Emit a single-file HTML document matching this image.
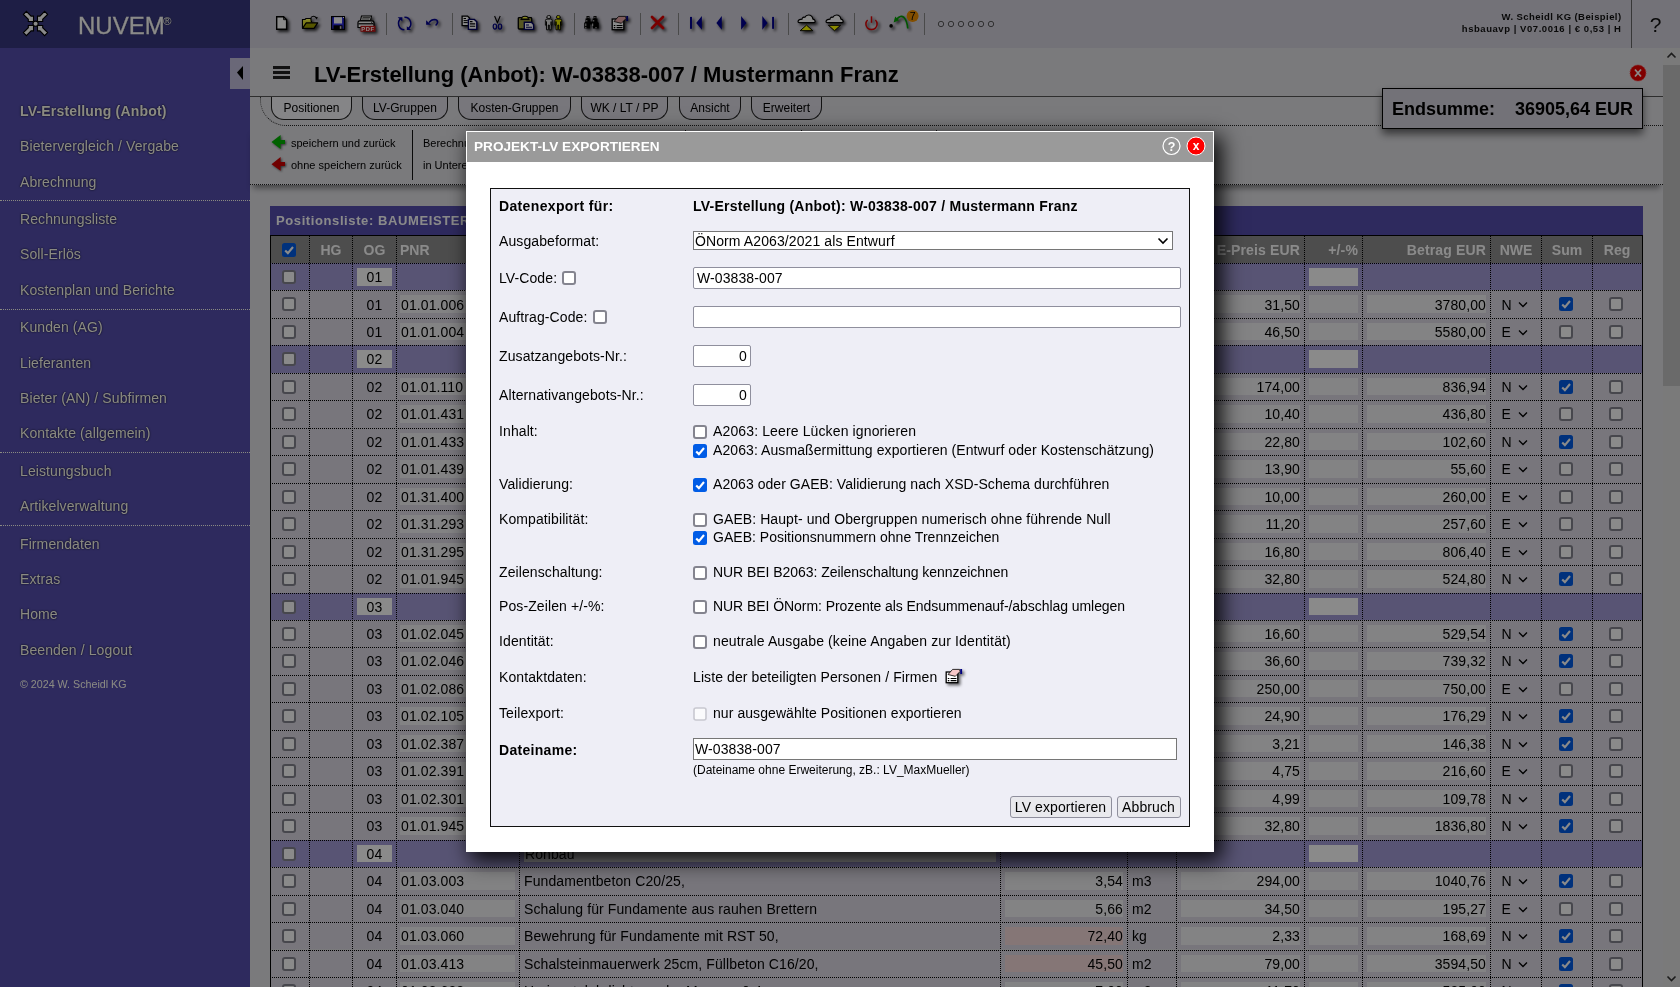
<!DOCTYPE html>
<html><head><meta charset="utf-8"><title>NUVEM - LV exportieren</title>
<style>
html,body{margin:0;padding:0;}
body{width:1680px;height:987px;overflow:hidden;position:relative;font-family:"Liberation Sans", sans-serif;background:#e2e2e6;}
.t{position:absolute;white-space:nowrap;font-family:"Liberation Sans", sans-serif;}
.ls{letter-spacing:0.12px}
input[type=checkbox]{accent-color:#0075ff;}
</style></head><body>
<div id="page" style="will-change:transform;position:absolute;left:0;top:0;width:1680px;height:987px;overflow:hidden">
<div style="position:absolute;left:0px;top:0px;width:250px;height:48px;background:#393980"></div>
<div style="position:absolute;left:0px;top:48px;width:250px;height:939px;background:#554eae"></div>
<svg style="position:absolute;left:20px;top:8px" width="32" height="32" viewBox="0 0 32 32">
<g fill="#ffffff" stroke="#000" stroke-width="1.1" stroke-linejoin="miter">
<path d="M3.4 6.4 L6.4 3.4 L11.1 8.1 L13.5 8.1 L13.5 13.5 L8.3 13.5 L8.3 11.3 Z"/>
<g transform="translate(31,0) scale(-1,1)"><path d="M3.4 6.4 L6.4 3.4 L11.1 8.1 L13.5 8.1 L13.5 13.5 L8.3 13.5 L8.3 11.3 Z"/></g>
<g transform="translate(0,31) scale(1,-1)"><path d="M3.4 6.4 L6.4 3.4 L11.1 8.1 L13.5 8.1 L13.5 13.5 L8.3 13.5 L8.3 11.3 Z"/></g>
<g transform="translate(31,31) scale(-1,-1)"><path d="M3.4 6.4 L6.4 3.4 L11.1 8.1 L13.5 8.1 L13.5 13.5 L8.3 13.5 L8.3 11.3 Z"/></g>
<circle cx="15.6" cy="15.7" r="2.6"/>
</g></svg>
<div class="t" style="left:78px;top:13.68px;font-size:24px;line-height:24px;font-weight:400;color:#ffffff;text-shadow:0 0 1px #000;-webkit-text-stroke:0.3px #ffffff;">NUVEM</div>
<div class="t" style="left:163px;top:16.07px;font-size:11.5px;line-height:11.5px;font-weight:400;color:#ffffff;text-shadow:0 0 1px #000;">&reg;</div>
<div style="position:absolute;left:230px;top:58px;width:20px;height:31px;background:#c4c1de"></div>
<svg style="position:absolute;left:236px;top:65px" width="8" height="16"><path d="M1 7.5 L7 1 L7 15 Z" fill="#000"/></svg>
<div class="t" style="left:20px;top:104.15px;font-size:14px;line-height:14px;font-weight:700;color:#fffff1;text-shadow:0 0 2px #000;letter-spacing:0.18px;">LV-Erstellung (Anbot)</div>
<div class="t" style="left:20px;top:139.15px;font-size:14px;line-height:14px;font-weight:400;color:#fffff1;text-shadow:0 0 2px #000;letter-spacing:0.1px;">Bietervergleich / Vergabe</div>
<div class="t" style="left:20px;top:175.15px;font-size:14px;line-height:14px;font-weight:400;color:#fffff1;text-shadow:0 0 2px #000;letter-spacing:0.1px;">Abrechnung</div>
<div class="t" style="left:20px;top:212.15px;font-size:14px;line-height:14px;font-weight:400;color:#fffff1;text-shadow:0 0 2px #000;letter-spacing:0.1px;">Rechnungsliste</div>
<div class="t" style="left:20px;top:247.15px;font-size:14px;line-height:14px;font-weight:400;color:#fffff1;text-shadow:0 0 2px #000;letter-spacing:0.1px;">Soll-Erl&ouml;s</div>
<div class="t" style="left:20px;top:282.85px;font-size:14px;line-height:14px;font-weight:400;color:#fffff1;text-shadow:0 0 2px #000;letter-spacing:0.1px;">Kostenplan und Berichte</div>
<div class="t" style="left:20px;top:320.35px;font-size:14px;line-height:14px;font-weight:400;color:#fffff1;text-shadow:0 0 2px #000;letter-spacing:0.1px;">Kunden (AG)</div>
<div class="t" style="left:20px;top:355.85px;font-size:14px;line-height:14px;font-weight:400;color:#fffff1;text-shadow:0 0 2px #000;letter-spacing:0.1px;">Lieferanten</div>
<div class="t" style="left:20px;top:390.85px;font-size:14px;line-height:14px;font-weight:400;color:#fffff1;text-shadow:0 0 2px #000;letter-spacing:0.1px;">Bieter (AN) / Subfirmen</div>
<div class="t" style="left:20px;top:425.85px;font-size:14px;line-height:14px;font-weight:400;color:#fffff1;text-shadow:0 0 2px #000;letter-spacing:0.1px;">Kontakte (allgemein)</div>
<div class="t" style="left:20px;top:463.85px;font-size:14px;line-height:14px;font-weight:400;color:#fffff1;text-shadow:0 0 2px #000;letter-spacing:0.1px;">Leistungsbuch</div>
<div class="t" style="left:20px;top:498.85px;font-size:14px;line-height:14px;font-weight:400;color:#fffff1;text-shadow:0 0 2px #000;letter-spacing:0.1px;">Artikelverwaltung</div>
<div class="t" style="left:20px;top:536.85px;font-size:14px;line-height:14px;font-weight:400;color:#fffff1;text-shadow:0 0 2px #000;letter-spacing:0.1px;">Firmendaten</div>
<div class="t" style="left:20px;top:571.85px;font-size:14px;line-height:14px;font-weight:400;color:#fffff1;text-shadow:0 0 2px #000;letter-spacing:0.1px;">Extras</div>
<div class="t" style="left:20px;top:606.85px;font-size:14px;line-height:14px;font-weight:400;color:#fffff1;text-shadow:0 0 2px #000;letter-spacing:0.1px;">Home</div>
<div class="t" style="left:20px;top:642.85px;font-size:14px;line-height:14px;font-weight:400;color:#fffff1;text-shadow:0 0 2px #000;letter-spacing:0.1px;">Beenden / Logout</div>
<div class="t" style="left:20px;top:678.94px;font-size:10.7px;line-height:10.7px;font-weight:400;color:#fffff1;">&copy; 2024 W. Scheidl KG</div>
<div style="position:absolute;left:0px;top:200px;width:250px;height:1px;border-top:1px dotted #fffff1;height:0"></div>
<div style="position:absolute;left:0px;top:309px;width:250px;height:1px;border-top:1px dotted #fffff1;height:0"></div>
<div style="position:absolute;left:0px;top:452px;width:250px;height:1px;border-top:1px dotted #fffff1;height:0"></div>
<div style="position:absolute;left:0px;top:525px;width:250px;height:1px;border-top:1px dotted #fffff1;height:0"></div>
<div style="position:absolute;left:250px;top:0px;width:1430px;height:48px;background:#d5d3de"></div>
<div style="position:absolute;left:250px;top:48px;width:1413px;height:939px;background:#e2e2e6"></div>
<svg style="position:absolute;left:276px;top:16px;filter:drop-shadow(2px 2px 1.5px rgba(0,0,0,.75));" width="12" height="15" viewBox="0 0 12 15"><path d="M0.7 0.7 H7.6 L10.6 3.7 V13.3 H0.7 Z" fill="#fff" stroke="#000" stroke-width="1.4" stroke-linejoin="miter"/><path d="M7.6 0.7 V3.7 H10.6" fill="none" stroke="#000" stroke-width="0.9"/></svg>
<svg style="position:absolute;left:301px;top:15px;filter:drop-shadow(2px 2px 1.5px rgba(0,0,0,.75));" width="19" height="15" viewBox="0 0 19 15"><path d="M1.5 13 V4.5 H4 L5 3.5 H10 V6.5 H11" fill="#ffff60" stroke="#000" stroke-width="1.2"/><path d="M2.2 5.5 H9.5 V8 H4.5 L2.2 11 Z" fill="#e8e830"/><path d="M1.5 13.3 L5.2 7.8 H16.7 L13 13.3 Z" fill="#a0a000" stroke="#000" stroke-width="1.2" stroke-linejoin="round"/><path d="M9.8 2.6 Q12.5 -0.2 15.3 2.6" fill="none" stroke="#000" stroke-width="1.1"/><path d="M14 2.2 L16.8 2 L15.8 4.6 Z" fill="#000"/></svg>
<svg style="position:absolute;left:331px;top:16px;filter:drop-shadow(2px 2px 1.5px rgba(0,0,0,.75));" width="14" height="14" viewBox="0 0 14 14"><rect x="0.6" y="0.6" width="12.8" height="12.8" fill="#3030e0" stroke="#000" stroke-width="1.2"/><rect x="3" y="1.2" width="8" height="6.3" fill="#fff"/><rect x="12" y="1" width="1" height="1" fill="#fff"/><rect x="2.5" y="9.3" width="9" height="4" fill="#000"/><rect x="8.8" y="10.2" width="1.6" height="2.6" fill="#ccc"/></svg>
<svg style="position:absolute;left:357px;top:15px;filter:drop-shadow(2px 2px 1.5px rgba(0,0,0,.75));" width="20" height="18" viewBox="0 0 20 18"><path d="M4.5 1 H14.5 L13.5 5.5 H3.5 Z" fill="#fff" stroke="#000" stroke-width="1.1"/><path d="M5.5 2.6 H13 M5 4 H12.5" stroke="#000" stroke-width="0.7"/><path d="M1 7.5 Q1 5.8 2.8 5.8 H15.2 Q17 5.8 17 7.5 V12.5 H1 Z" fill="#fff" stroke="#000" stroke-width="1.2"/><path d="M1.5 8.8 H16.5" stroke="#000" stroke-width="1.2"/><path d="M15 6.3 L16.5 7.8 M14 7 L16.5 9.5" stroke="#000" stroke-width="0.6"/><rect x="3.5" y="10.8" width="15" height="6" fill="#c01818"/><text x="11" y="15.8" font-size="5.8" font-weight="700" fill="#fff" text-anchor="middle" font-family="Liberation Sans" letter-spacing="0.6">PDF</text></svg>
<div style="position:absolute;left:386px;top:13px;width:1px;height:22px;background:#8a8a8a"></div>
<svg style="position:absolute;left:396px;top:16px;filter:drop-shadow(2px 2px 1.5px rgba(0,0,0,.75));" width="17" height="16" viewBox="0 0 17 16"><g fill="none" stroke="#000090" stroke-width="1.5"><path d="M5.15 2.4 A6.3 6.3 0 0 0 8.4 13.8"/><path d="M8.4 1.2 A6.3 6.3 0 0 1 11.6 13"/></g><path d="M1.7 1.2 H6.4 V5.6 Z" fill="#000090"/><path d="M10.8 10.2 V13.9 H15 Z" fill="#000090"/></svg>
<svg style="position:absolute;left:425px;top:18px;filter:drop-shadow(2px 2px 1.5px rgba(0,0,0,.75));" width="15" height="10" viewBox="0 0 15 10"><path d="M4 4.6 Q6.3 1.5 9.5 1.5 Q12.6 1.6 12.6 4.4 Q12.4 6 10.6 7.5" fill="none" stroke="#000090" stroke-width="1.5"/><path d="M1.1 2.2 V6.8 H6 Z" fill="#000090"/></svg>
<div style="position:absolute;left:452px;top:13px;width:1px;height:22px;background:#8a8a8a"></div>
<svg style="position:absolute;left:461px;top:15px;filter:drop-shadow(2px 2px 1.5px rgba(0,0,0,.75));" width="17" height="16" viewBox="0 0 17 16"><path d="M1.1 1.1 H6.6 L8.5 3 V10.7 H1.1 Z" fill="#fff" stroke="#000" stroke-width="1.3"/><path d="M2.6 3.5 H5 M2.6 5.6 H6.8 M2.6 7.6 H6.8" stroke="#000" stroke-width="1"/><path d="M7.4 4.4 H13.4 L15.8 6.8 V14.4 H7.4 Z" fill="#fff" stroke="#000060" stroke-width="1.4"/><path d="M8.9 6.6 H11.5 M8.9 8.9 H14.2 M8.9 11.2 H14.2" stroke="#000" stroke-width="1.1"/></svg>
<svg style="position:absolute;left:491px;top:15px;filter:drop-shadow(2px 2px 1.5px rgba(0,0,0,.75));" width="13" height="16" viewBox="0 0 13 16"><path d="M3.6 1 L6.6 8.2 M9.2 1 L6.2 8.2" stroke="#000" stroke-width="1.1"/><ellipse cx="3.9" cy="11.6" rx="1.7" ry="2.6" fill="none" stroke="#000080" stroke-width="1.2"/><ellipse cx="9" cy="11.6" rx="1.7" ry="2.6" fill="none" stroke="#000080" stroke-width="1.2"/></svg>
<svg style="position:absolute;left:517px;top:15px;filter:drop-shadow(2px 2px 1.5px rgba(0,0,0,.75));" width="18" height="16" viewBox="0 0 18 16"><rect x="1.3" y="2.6" width="13.4" height="11.4" rx="0.8" fill="#a0a040" stroke="#000" stroke-width="1.3"/><path d="M4.6 4 Q4.6 1.2 8 1.2 Q11.4 1.2 11.4 4 Z" fill="#ffff40" stroke="#000" stroke-width="1.1"/><path d="M3.4 4.6 H12.6" stroke="#000" stroke-width="1"/><path d="M7.3 7.3 H14.4 L16.6 9.5 V14.4 H7.3 Z" fill="#fff" stroke="#000060" stroke-width="1.4"/><path d="M9 10 H12 M9 12.2 H15" stroke="#000060" stroke-width="1.1"/></svg>
<svg style="position:absolute;left:544px;top:15px;filter:drop-shadow(2px 2px 1.5px rgba(0,0,0,.75));" width="20" height="16" viewBox="0 0 20 16"><g transform="translate(0.8,0)"><path d="M1.6 2.4 H6.4" stroke="#000" stroke-width="0.9"/><ellipse cx="4" cy="2" rx="1.9" ry="1.6" fill="#e0e0e0" stroke="#000" stroke-width="0.8"/><path d="M0.6 5.6 Q0.6 4.1 2.2 4.1 H5.8 Q7.4 4.1 7.4 5.6 V10.2 H6.3 V6.6 V14.8 H4.5 V10 H3.5 V14.8 H1.7 V6.6 V10.2 H0.6 Z" fill="#e0e0e0" stroke="#000" stroke-width="0.9" stroke-linejoin="round"/></g><g transform="translate(10.3,0)"><path d="M1.6 2.4 H6.4" stroke="#000" stroke-width="0.9"/><ellipse cx="4" cy="2" rx="1.9" ry="1.6" fill="#f0f000" stroke="#000" stroke-width="0.8"/><path d="M0.6 5.6 Q0.6 4.1 2.2 4.1 H5.8 Q7.4 4.1 7.4 5.6 V10.2 H6.3 V6.6 V14.8 H4.5 V10 H3.5 V14.8 H1.7 V6.6 V10.2 H0.6 Z" fill="#f0f000" stroke="#000" stroke-width="0.9" stroke-linejoin="round"/></g></svg>
<div style="position:absolute;left:574px;top:13px;width:1px;height:22px;background:#8a8a8a"></div>
<svg style="position:absolute;left:583px;top:15px;filter:drop-shadow(2px 2px 1.5px rgba(0,0,0,.75));" width="17" height="15" viewBox="0 0 17 15"><path d="M3.5 1 H6.5 V3.5 H7.5 V6.5 H9.5 V3.5 H10.5 V1 H13.5 V3.5 H14.5 V6.5 L15.8 8 V13.6 H10 V9.5 H7 V13.6 H1.2 V8 L2.5 6.5 V3.5 H3.5 Z" fill="#000"/><rect x="4.6" y="1.8" width="1" height="1.3" fill="#bbb"/><rect x="11.4" y="1.8" width="1" height="1.3" fill="#bbb"/><rect x="3.3" y="5" width="1" height="1.5" fill="#bbb"/><rect x="10.2" y="5" width="1" height="1.5" fill="#bbb"/><rect x="2.3" y="8.5" width="1" height="2.6" fill="#ccc"/><rect x="9.2" y="8.5" width="1" height="2.6" fill="#ccc"/><rect x="2.3" y="12" width="1" height="1.3" fill="#ccc"/><rect x="12.5" y="12" width="1" height="1.3" fill="#ccc"/></svg>
<svg style="position:absolute;left:611px;top:15px;filter:drop-shadow(2px 2px 1.5px rgba(0,0,0,.75));" width="18" height="16" viewBox="0 0 18 16"><rect x="1.2" y="4" width="11.6" height="10.7" fill="#fff" stroke="#000" stroke-width="1.3"/><path d="M2.8 10.5 H4.3 M5.6 10.5 H11.5 M2.8 12.6 H4.3 M5.6 12.6 H11.5" stroke="#000" stroke-width="1.1"/><path d="M3 6.5 L7.6 1.4 H14.6 L15 3.6 L10.3 8.3 Z" fill="#e8a8a8" stroke="#000" stroke-width="0.8"/><rect x="15.2" y="1" width="1.9" height="5" fill="#000080"/></svg>
<div style="position:absolute;left:640px;top:13px;width:1px;height:22px;background:#8a8a8a"></div>
<svg style="position:absolute;left:650px;top:15px;filter:drop-shadow(2px 2px 1.5px rgba(0,0,0,.75));" width="15" height="15" viewBox="0 0 15 15"><path d="M2 2 L13 13 M13 2 L2 13" stroke="#e00000" stroke-width="2.8" stroke-linecap="round"/></svg>
<div style="position:absolute;left:678px;top:13px;width:1px;height:22px;background:#8a8a8a"></div>
<svg style="position:absolute;left:688px;top:14px;filter:drop-shadow(2px 2px 1.5px rgba(0,0,0,.75));" width="90" height="18" viewBox="0 0 90 18"><g fill="#000090"><rect x="2" y="2.9" width="2" height="11.9"/><path d="M8.2 8.9 L13.9 2 V15.7 Z"/><path d="M28.4 8.9 L33.8 2 V15.7 Z"/><path d="M53.1 2 L58.5 8.9 L53.1 15.7 Z"/><path d="M74.3 2 L79.6 8.9 L74.3 15.7 Z"/><rect x="84.1" y="2.9" width="1.9" height="11.9"/></g></svg>
<div style="position:absolute;left:788px;top:13px;width:1px;height:22px;background:#8a8a8a"></div>
<svg style="position:absolute;left:796px;top:13px;filter:drop-shadow(2px 2px 1.5px rgba(0,0,0,.75));" width="21" height="20" viewBox="0 0 21 20"><path d="M3 9.6 H18 Q19.3 9.6 19.1 8 Q18.9 6.2 16.9 6.1 Q16.2 2 12.6 2 Q9.9 2 8.9 4.3 Q7.3 3.8 6.4 5 Q6 5.6 6.1 6.1 Q2.3 6.4 2 8.3 Q2 9.6 3 9.6 Z" fill="#fff" stroke="#000" stroke-width="1.15" stroke-linejoin="round"/><path d="M10.5 12.1 L16.7 17.7 L4.2 17.7 Z" fill="#ffff00" stroke="#000" stroke-width="1"/></svg>
<svg style="position:absolute;left:824px;top:13px;filter:drop-shadow(2px 2px 1.5px rgba(0,0,0,.75));" width="21" height="20" viewBox="0 0 21 20"><path d="M3 9.6 H18 Q19.3 9.6 19.1 8 Q18.9 6.2 16.9 6.1 Q16.2 2 12.6 2 Q9.9 2 8.9 4.3 Q7.3 3.8 6.4 5 Q6 5.6 6.1 6.1 Q2.3 6.4 2 8.3 Q2 9.6 3 9.6 Z" fill="#fff" stroke="#000" stroke-width="1.15" stroke-linejoin="round"/><path d="M4.4 12.3 L16.6 12.3 L10.5 17.7 Z" fill="#ffff00" stroke="#000" stroke-width="1"/></svg>
<div style="position:absolute;left:854px;top:13px;width:1px;height:22px;background:#8a8a8a"></div>
<svg style="position:absolute;left:864px;top:16px;filter:drop-shadow(2px 2px 1.5px rgba(0,0,0,.75));" width="15" height="15" viewBox="0 0 15 15"><path d="M3.6 4 A5.6 5.6 0 1 0 11.4 4" fill="none" stroke="#e00000" stroke-width="1.5"/><path d="M7.5 0.3 V6.8" stroke="#e00000" stroke-width="1.5"/></svg>
<svg style="position:absolute;left:888px;top:9px" width="32" height="24" viewBox="0 0 32 24"><g style="filter:drop-shadow(2px 2px 1.5px rgba(0,0,0,.75));"><circle cx="3.1" cy="16.9" r="1.8" fill="#000"/><path d="M8.5 10.5 Q12.5 5.5 16 8.5 Q19 11.5 19.8 19.5" fill="none" stroke="#00a000" stroke-width="1.7"/><path d="M5.6 13.6 L7.2 7.6 L11 11.2 Z" fill="#00a000"/></g><circle cx="24.6" cy="7.1" r="6" fill="#f09000"/><text x="24.6" y="11" font-size="10.5" fill="#000" text-anchor="middle" font-family="Liberation Sans">7</text></svg>
<div style="position:absolute;left:924px;top:13px;width:1px;height:22px;background:#8a8a8a"></div>
<svg style="position:absolute;left:937px;top:20px" width="62" height="8"><circle cx="4" cy="4" r="2.7" fill="none" stroke="#5a5a5a" stroke-width="1"/><circle cx="14" cy="4" r="2.7" fill="none" stroke="#5a5a5a" stroke-width="1"/><circle cx="24" cy="4" r="2.7" fill="none" stroke="#5a5a5a" stroke-width="1"/><circle cx="34" cy="4" r="2.7" fill="none" stroke="#5a5a5a" stroke-width="1"/><circle cx="44" cy="4" r="2.7" fill="none" stroke="#5a5a5a" stroke-width="1"/><circle cx="54" cy="4" r="2.7" fill="none" stroke="#5a5a5a" stroke-width="1"/></svg>
<div class="t" style="left:1321.5px;width:300px;text-align:right;top:11.76px;font-size:9.5px;line-height:9.5px;font-weight:700;color:#111;letter-spacing:0.42px;">W. Scheidl KG (Beispiel)</div>
<div class="t" style="left:1321.5px;width:300px;text-align:right;top:24.36px;font-size:9.5px;line-height:9.5px;font-weight:700;color:#111;letter-spacing:0.55px;">hsbauavp | V07.0016 | &euro; 0,53 | H</div>
<div style="position:absolute;left:1631px;top:0px;width:1px;height:48px;background:#666"></div>
<div class="t" style="left:1640.5px;width:30px;text-align:center;top:13.92px;font-size:21px;line-height:21px;font-weight:400;color:#111;">?</div>
<svg style="position:absolute;left:273px;top:66px" width="17" height="13"><rect x="0" y="0" width="17" height="3" fill="#222"/><rect x="0" y="5" width="17" height="3" fill="#222"/><rect x="0" y="10" width="17" height="3" fill="#222"/></svg>
<div class="t" style="left:314px;top:63.68px;font-size:22px;line-height:22px;font-weight:700;color:#000;">LV-Erstellung (Anbot): W-03838-007 / Mustermann Franz</div>
<svg style="position:absolute;left:1629px;top:64px" width="18" height="18"><circle cx="9" cy="9" r="8" fill="#ed0000" stroke="#ff5959" stroke-width="1" stroke-dasharray="1 1"/><path d="M6 5.5 L12 12.5 M12 5.5 L6 12.5" stroke="#ffffff" stroke-width="1.8"/></svg>
<div style="position:absolute;left:250px;top:96px;width:1413px;height:1px;background:#555"></div>
<div style="position:absolute;left:260px;top:97px;width:1403px;height:29px;border-left:1px dotted #444;border-bottom:1px dotted #222;border-bottom-left-radius:26px;box-sizing:border-box"></div>
<div style="position:absolute;left:271px;top:97px;width:81px;height:23px;box-sizing:border-box;border:1px solid #222;border-top:none;border-radius:0 0 13px 13px;background:#f6f6fa"></div>
<div class="t" style="left:271.0px;width:81px;text-align:center;top:101.84px;font-size:12px;line-height:12px;font-weight:400;color:#000;">Positionen</div>
<div style="position:absolute;left:362px;top:97px;width:86px;height:23px;box-sizing:border-box;border:1px solid #222;border-top:none;border-radius:0 0 13px 13px;background:#dedce6"></div>
<div class="t" style="left:362.0px;width:86px;text-align:center;top:101.84px;font-size:12px;line-height:12px;font-weight:400;color:#000;">LV-Gruppen</div>
<div style="position:absolute;left:458px;top:97px;width:113px;height:23px;box-sizing:border-box;border:1px solid #222;border-top:none;border-radius:0 0 13px 13px;background:#dedce6"></div>
<div class="t" style="left:458.0px;width:113px;text-align:center;top:101.84px;font-size:12px;line-height:12px;font-weight:400;color:#000;">Kosten-Gruppen</div>
<div style="position:absolute;left:581px;top:97px;width:87px;height:23px;box-sizing:border-box;border:1px solid #222;border-top:none;border-radius:0 0 13px 13px;background:#dedce6"></div>
<div class="t" style="left:581.0px;width:87px;text-align:center;top:101.84px;font-size:12px;line-height:12px;font-weight:400;color:#000;">WK / LT / PP</div>
<div style="position:absolute;left:679px;top:97px;width:62px;height:23px;box-sizing:border-box;border:1px solid #222;border-top:none;border-radius:0 0 13px 13px;background:#dedce6"></div>
<div class="t" style="left:679.0px;width:62px;text-align:center;top:101.84px;font-size:12px;line-height:12px;font-weight:400;color:#000;">Ansicht</div>
<div style="position:absolute;left:751px;top:97px;width:71px;height:23px;box-sizing:border-box;border:1px solid #222;border-top:none;border-radius:0 0 13px 13px;background:#dedce6"></div>
<div class="t" style="left:751.0px;width:71px;text-align:center;top:101.84px;font-size:12px;line-height:12px;font-weight:400;color:#000;">Erweitert</div>
<div style="position:absolute;left:250px;top:126px;width:1413px;height:59px;border-bottom:1px dotted #222;box-sizing:border-box;box-shadow:0 6px 6px -3px rgba(0,0,0,.45)"></div>
<div style="position:absolute;left:250px;top:126px;width:1413px;height:58px;background:#e2e2e6"></div>
<svg style="position:absolute;left:270px;top:134px" width="18" height="17"><path d="M1.5 8.1 L10.6 1.1 V6 H15 V10 H10.6 V14.9 Z" fill="#00b400" filter="drop-shadow(1.5px 1.5px 1px rgba(0,0,0,.6))"/></svg>
<svg style="position:absolute;left:270px;top:156px" width="18" height="17"><path d="M1.5 8.3 L10.6 1 V6 H15 V10 H10.6 V14.8 Z" fill="#d00000" filter="drop-shadow(1.5px 1.5px 1px rgba(0,0,0,.6))"/></svg>
<div class="t" style="left:291px;top:137.69px;font-size:11px;line-height:11px;font-weight:400;color:#000;">speichern und zur&uuml;ck</div>
<div class="t" style="left:291px;top:159.69px;font-size:11px;line-height:11px;font-weight:400;color:#000;">ohne speichern zur&uuml;ck</div>
<div style="position:absolute;left:412px;top:130px;width:1px;height:50px;background:#111"></div>
<div style="position:absolute;left:685px;top:130px;width:1px;height:50px;background:#111"></div>
<div style="position:absolute;left:801px;top:130px;width:1px;height:50px;background:#111"></div>
<div style="position:absolute;left:936px;top:130px;width:1px;height:50px;background:#111"></div>
<div class="t" style="left:423px;top:137.69px;font-size:11px;line-height:11px;font-weight:400;color:#000;">Berechnung der Mengen</div>
<div class="t" style="left:423px;top:159.69px;font-size:11px;line-height:11px;font-weight:400;color:#000;">in Unterebenen</div>
<div style="position:absolute;left:270px;top:206px;width:1373px;height:30px;background:#554eae"></div>
<div class="t" style="left:276px;top:214.00px;font-size:13px;line-height:13px;font-weight:700;color:#ffffff;letter-spacing:0.6px;">Positionsliste: BAUMEISTERARBEITEN</div>
<div style="position:absolute;left:270px;top:235px;width:1373px;height:1px;background:#000"></div>
<div style="position:absolute;left:270px;top:236px;width:1373px;height:28px;background:#8f8f8f"></div>
<div class="t" style="left:311.0px;width:40px;text-align:center;top:243.15px;font-size:14px;line-height:14px;font-weight:700;color:#ffffff;">HG</div>
<div class="t" style="left:354.5px;width:40px;text-align:center;top:243.15px;font-size:14px;line-height:14px;font-weight:700;color:#ffffff;">OG</div>
<div class="t" style="left:400px;top:243.15px;font-size:14px;line-height:14px;font-weight:700;color:#ffffff;">PNR</div>
<div class="t" style="left:524px;top:243.15px;font-size:14px;line-height:14px;font-weight:700;color:#ffffff;">Kurztext</div>
<div class="t" style="left:1003px;width:120px;text-align:right;top:243.15px;font-size:14px;line-height:14px;font-weight:700;color:#ffffff;">Menge</div>
<div class="t" style="left:1180px;top:243.15px;font-size:14px;line-height:14px;font-weight:700;color:#ffffff;">EH</div>
<div class="t" style="left:1180px;width:120px;text-align:right;top:243.15px;font-size:14px;line-height:14px;font-weight:700;color:#ffffff;letter-spacing:0.15px;">E-Preis EUR</div>
<div class="t" style="left:1298px;width:60px;text-align:right;top:243.15px;font-size:14px;line-height:14px;font-weight:700;color:#ffffff;letter-spacing:0.15px;">+/-%</div>
<div class="t" style="left:1366px;width:120px;text-align:right;top:243.15px;font-size:14px;line-height:14px;font-weight:700;color:#ffffff;letter-spacing:0.15px;">Betrag EUR</div>
<div class="t" style="left:1491.0px;width:50px;text-align:center;top:243.15px;font-size:14px;line-height:14px;font-weight:700;color:#ffffff;">NWE</div>
<div class="t" style="left:1542.0px;width:50px;text-align:center;top:243.15px;font-size:14px;line-height:14px;font-weight:700;color:#ffffff;">Sum</div>
<div class="t" style="left:1592.0px;width:50px;text-align:center;top:243.15px;font-size:14px;line-height:14px;font-weight:700;color:#ffffff;">Reg</div>
<svg style="position:absolute;left:282px;top:243.00px" width="14" height="14" viewBox="0 0 14 14"><rect x="0" y="0" width="14" height="14" rx="2.5" fill="#005ce6"/><path d="M3.2 7.4 L5.9 10.1 L11 4" fill="none" stroke="#fff" stroke-width="2.1"/></svg>
<div style="position:absolute;left:270px;top:263.0px;width:1373px;height:27.46px;background:#a39cd7"></div>
<div style="position:absolute;left:357px;top:268.0px;width:35px;height:17.5px;background:#ffffff"></div>
<div class="t" style="left:357.0px;width:35px;text-align:center;top:270.05px;font-size:14px;line-height:14px;font-weight:400;color:#000;letter-spacing:0.1px;">01</div>
<div style="position:absolute;left:1309px;top:268.0px;width:49px;height:17.5px;background:#ffffff"></div>
<div style="position:absolute;left:524px;top:268.0px;width:472px;height:17.5px;background:#ededf1"></div>
<div class="t" style="left:525px;top:270.05px;font-size:14px;line-height:14px;font-weight:400;color:#000;letter-spacing:0.1px;">Erdarbeiten</div>
<svg style="position:absolute;left:282px;top:270.00px" width="14" height="14" viewBox="0 0 14 14"><rect x="1" y="1" width="12" height="12" rx="2" fill="#fff" stroke="#84848f" stroke-width="2"/></svg>
<div style="position:absolute;left:270px;top:290.46px;width:1373px;height:27.46px;background:#dedbe6"></div>
<div class="t" style="left:357.0px;width:35px;text-align:center;top:297.51px;font-size:14px;line-height:14px;font-weight:400;color:#000;letter-spacing:0.1px;">01</div>
<div style="position:absolute;left:400px;top:295.46px;width:115px;height:17.5px;background:#f3f3f4"></div>
<div class="t" style="left:401px;top:297.51px;font-size:14px;line-height:14px;font-weight:400;color:#000;letter-spacing:0.1px;">01.01.006</div>
<div class="t" style="left:524px;top:297.51px;font-size:14px;line-height:14px;font-weight:400;color:#000;letter-spacing:0.1px;">Aushub Baugrube</div>
<div style="position:absolute;left:1005px;top:295.46px;width:118px;height:17.5px;background:#f3f3f4"></div>
<div class="t" style="left:1013px;width:110px;text-align:right;top:297.51px;font-size:14px;line-height:14px;font-weight:400;color:#000;letter-spacing:0.1px;">120,00</div>
<div class="t" style="left:1132px;top:297.51px;font-size:14px;line-height:14px;font-weight:400;color:#000;letter-spacing:0.1px;">m3</div>
<div style="position:absolute;left:1181px;top:295.46px;width:119px;height:17.5px;background:#f3f3f4"></div>
<div class="t" style="left:1190px;width:110px;text-align:right;top:297.51px;font-size:14px;line-height:14px;font-weight:400;color:#000;letter-spacing:0.1px;">31,50</div>
<div style="position:absolute;left:1309px;top:295.46px;width:49px;height:17.5px;background:#f3f3f4"></div>
<div style="position:absolute;left:1367px;top:295.46px;width:119px;height:17.5px;background:#f3f3f4"></div>
<div class="t" style="left:1376px;width:110px;text-align:right;top:297.51px;font-size:14px;line-height:14px;font-weight:400;color:#000;letter-spacing:0.1px;">3780,00</div>
<div class="t" style="left:1501.5px;top:297.51px;font-size:14px;line-height:14px;font-weight:400;color:#000;letter-spacing:0.1px;">N</div>
<svg style="position:absolute;left:1518px;top:301.46px" width="10" height="7"><path d="M1 1.5 L5 5.5 L9 1.5" fill="none" stroke="#000" stroke-width="1.3"/></svg>
<svg style="position:absolute;left:1559px;top:297.46px" width="14" height="14" viewBox="0 0 14 14"><rect x="0" y="0" width="14" height="14" rx="2.5" fill="#005ce6"/><path d="M3.2 7.4 L5.9 10.1 L11 4" fill="none" stroke="#fff" stroke-width="2.1"/></svg>
<svg style="position:absolute;left:1609px;top:297.46px" width="14" height="14" viewBox="0 0 14 14"><rect x="1" y="1" width="12" height="12" rx="2" fill="#fff" stroke="#84848f" stroke-width="2"/></svg>
<svg style="position:absolute;left:282px;top:297.46px" width="14" height="14" viewBox="0 0 14 14"><rect x="1" y="1" width="12" height="12" rx="2" fill="#fff" stroke="#84848f" stroke-width="2"/></svg>
<div style="position:absolute;left:270px;top:317.92px;width:1373px;height:27.46px;background:#dedbe6"></div>
<div class="t" style="left:357.0px;width:35px;text-align:center;top:324.97px;font-size:14px;line-height:14px;font-weight:400;color:#000;letter-spacing:0.1px;">01</div>
<div style="position:absolute;left:400px;top:322.92px;width:115px;height:17.5px;background:#f3f3f4"></div>
<div class="t" style="left:401px;top:324.97px;font-size:14px;line-height:14px;font-weight:400;color:#000;letter-spacing:0.1px;">01.01.004</div>
<div class="t" style="left:524px;top:324.97px;font-size:14px;line-height:14px;font-weight:400;color:#000;letter-spacing:0.1px;">Humus abtragen</div>
<div style="position:absolute;left:1005px;top:322.92px;width:118px;height:17.5px;background:#f3f3f4"></div>
<div class="t" style="left:1013px;width:110px;text-align:right;top:324.97px;font-size:14px;line-height:14px;font-weight:400;color:#000;letter-spacing:0.1px;">120,00</div>
<div class="t" style="left:1132px;top:324.97px;font-size:14px;line-height:14px;font-weight:400;color:#000;letter-spacing:0.1px;">m2</div>
<div style="position:absolute;left:1181px;top:322.92px;width:119px;height:17.5px;background:#f3f3f4"></div>
<div class="t" style="left:1190px;width:110px;text-align:right;top:324.97px;font-size:14px;line-height:14px;font-weight:400;color:#000;letter-spacing:0.1px;">46,50</div>
<div style="position:absolute;left:1309px;top:322.92px;width:49px;height:17.5px;background:#f3f3f4"></div>
<div style="position:absolute;left:1367px;top:322.92px;width:119px;height:17.5px;background:#f3f3f4"></div>
<div class="t" style="left:1376px;width:110px;text-align:right;top:324.97px;font-size:14px;line-height:14px;font-weight:400;color:#000;letter-spacing:0.1px;">5580,00</div>
<div class="t" style="left:1501.5px;top:324.97px;font-size:14px;line-height:14px;font-weight:400;color:#000;letter-spacing:0.1px;">E</div>
<svg style="position:absolute;left:1518px;top:328.92px" width="10" height="7"><path d="M1 1.5 L5 5.5 L9 1.5" fill="none" stroke="#000" stroke-width="1.3"/></svg>
<svg style="position:absolute;left:1559px;top:324.92px" width="14" height="14" viewBox="0 0 14 14"><rect x="1" y="1" width="12" height="12" rx="2" fill="#fff" stroke="#84848f" stroke-width="2"/></svg>
<svg style="position:absolute;left:1609px;top:324.92px" width="14" height="14" viewBox="0 0 14 14"><rect x="1" y="1" width="12" height="12" rx="2" fill="#fff" stroke="#84848f" stroke-width="2"/></svg>
<svg style="position:absolute;left:282px;top:324.92px" width="14" height="14" viewBox="0 0 14 14"><rect x="1" y="1" width="12" height="12" rx="2" fill="#fff" stroke="#84848f" stroke-width="2"/></svg>
<div style="position:absolute;left:270px;top:345.38px;width:1373px;height:27.46px;background:#a39cd7"></div>
<div style="position:absolute;left:357px;top:350.38px;width:35px;height:17.5px;background:#ffffff"></div>
<div class="t" style="left:357.0px;width:35px;text-align:center;top:352.43px;font-size:14px;line-height:14px;font-weight:400;color:#000;letter-spacing:0.1px;">02</div>
<div style="position:absolute;left:1309px;top:350.38px;width:49px;height:17.5px;background:#ffffff"></div>
<div style="position:absolute;left:524px;top:350.38px;width:472px;height:17.5px;background:#ededf1"></div>
<div class="t" style="left:525px;top:352.43px;font-size:14px;line-height:14px;font-weight:400;color:#000;letter-spacing:0.1px;">Baustelleneinrichtung</div>
<svg style="position:absolute;left:282px;top:352.38px" width="14" height="14" viewBox="0 0 14 14"><rect x="1" y="1" width="12" height="12" rx="2" fill="#fff" stroke="#84848f" stroke-width="2"/></svg>
<div style="position:absolute;left:270px;top:372.84000000000003px;width:1373px;height:27.46px;background:#dedbe6"></div>
<div class="t" style="left:357.0px;width:35px;text-align:center;top:379.89px;font-size:14px;line-height:14px;font-weight:400;color:#000;letter-spacing:0.1px;">02</div>
<div style="position:absolute;left:400px;top:377.84000000000003px;width:115px;height:17.5px;background:#f3f3f4"></div>
<div class="t" style="left:401px;top:379.89px;font-size:14px;line-height:14px;font-weight:400;color:#000;letter-spacing:0.1px;">01.01.110</div>
<div class="t" style="left:524px;top:379.89px;font-size:14px;line-height:14px;font-weight:400;color:#000;letter-spacing:0.1px;">Baustelle einrichten</div>
<div style="position:absolute;left:1005px;top:377.84000000000003px;width:118px;height:17.5px;background:#f3f3f4"></div>
<div class="t" style="left:1013px;width:110px;text-align:right;top:379.89px;font-size:14px;line-height:14px;font-weight:400;color:#000;letter-spacing:0.1px;">4,81</div>
<div class="t" style="left:1132px;top:379.89px;font-size:14px;line-height:14px;font-weight:400;color:#000;letter-spacing:0.1px;">PA</div>
<div style="position:absolute;left:1181px;top:377.84000000000003px;width:119px;height:17.5px;background:#f3f3f4"></div>
<div class="t" style="left:1190px;width:110px;text-align:right;top:379.89px;font-size:14px;line-height:14px;font-weight:400;color:#000;letter-spacing:0.1px;">174,00</div>
<div style="position:absolute;left:1309px;top:377.84000000000003px;width:49px;height:17.5px;background:#f3f3f4"></div>
<div style="position:absolute;left:1367px;top:377.84000000000003px;width:119px;height:17.5px;background:#f3f3f4"></div>
<div class="t" style="left:1376px;width:110px;text-align:right;top:379.89px;font-size:14px;line-height:14px;font-weight:400;color:#000;letter-spacing:0.1px;">836,94</div>
<div class="t" style="left:1501.5px;top:379.89px;font-size:14px;line-height:14px;font-weight:400;color:#000;letter-spacing:0.1px;">N</div>
<svg style="position:absolute;left:1518px;top:383.84px" width="10" height="7"><path d="M1 1.5 L5 5.5 L9 1.5" fill="none" stroke="#000" stroke-width="1.3"/></svg>
<svg style="position:absolute;left:1559px;top:379.84px" width="14" height="14" viewBox="0 0 14 14"><rect x="0" y="0" width="14" height="14" rx="2.5" fill="#005ce6"/><path d="M3.2 7.4 L5.9 10.1 L11 4" fill="none" stroke="#fff" stroke-width="2.1"/></svg>
<svg style="position:absolute;left:1609px;top:379.84px" width="14" height="14" viewBox="0 0 14 14"><rect x="1" y="1" width="12" height="12" rx="2" fill="#fff" stroke="#84848f" stroke-width="2"/></svg>
<svg style="position:absolute;left:282px;top:379.84px" width="14" height="14" viewBox="0 0 14 14"><rect x="1" y="1" width="12" height="12" rx="2" fill="#fff" stroke="#84848f" stroke-width="2"/></svg>
<div style="position:absolute;left:270px;top:400.3px;width:1373px;height:27.46px;background:#dedbe6"></div>
<div class="t" style="left:357.0px;width:35px;text-align:center;top:407.35px;font-size:14px;line-height:14px;font-weight:400;color:#000;letter-spacing:0.1px;">02</div>
<div style="position:absolute;left:400px;top:405.3px;width:115px;height:17.5px;background:#f3f3f4"></div>
<div class="t" style="left:401px;top:407.35px;font-size:14px;line-height:14px;font-weight:400;color:#000;letter-spacing:0.1px;">01.01.431</div>
<div class="t" style="left:524px;top:407.35px;font-size:14px;line-height:14px;font-weight:400;color:#000;letter-spacing:0.1px;">Bauzaun</div>
<div style="position:absolute;left:1005px;top:405.3px;width:118px;height:17.5px;background:#f3f3f4"></div>
<div class="t" style="left:1013px;width:110px;text-align:right;top:407.35px;font-size:14px;line-height:14px;font-weight:400;color:#000;letter-spacing:0.1px;">42,00</div>
<div class="t" style="left:1132px;top:407.35px;font-size:14px;line-height:14px;font-weight:400;color:#000;letter-spacing:0.1px;">m</div>
<div style="position:absolute;left:1181px;top:405.3px;width:119px;height:17.5px;background:#f3f3f4"></div>
<div class="t" style="left:1190px;width:110px;text-align:right;top:407.35px;font-size:14px;line-height:14px;font-weight:400;color:#000;letter-spacing:0.1px;">10,40</div>
<div style="position:absolute;left:1309px;top:405.3px;width:49px;height:17.5px;background:#f3f3f4"></div>
<div style="position:absolute;left:1367px;top:405.3px;width:119px;height:17.5px;background:#f3f3f4"></div>
<div class="t" style="left:1376px;width:110px;text-align:right;top:407.35px;font-size:14px;line-height:14px;font-weight:400;color:#000;letter-spacing:0.1px;">436,80</div>
<div class="t" style="left:1501.5px;top:407.35px;font-size:14px;line-height:14px;font-weight:400;color:#000;letter-spacing:0.1px;">E</div>
<svg style="position:absolute;left:1518px;top:411.30px" width="10" height="7"><path d="M1 1.5 L5 5.5 L9 1.5" fill="none" stroke="#000" stroke-width="1.3"/></svg>
<svg style="position:absolute;left:1559px;top:407.30px" width="14" height="14" viewBox="0 0 14 14"><rect x="1" y="1" width="12" height="12" rx="2" fill="#fff" stroke="#84848f" stroke-width="2"/></svg>
<svg style="position:absolute;left:1609px;top:407.30px" width="14" height="14" viewBox="0 0 14 14"><rect x="1" y="1" width="12" height="12" rx="2" fill="#fff" stroke="#84848f" stroke-width="2"/></svg>
<svg style="position:absolute;left:282px;top:407.30px" width="14" height="14" viewBox="0 0 14 14"><rect x="1" y="1" width="12" height="12" rx="2" fill="#fff" stroke="#84848f" stroke-width="2"/></svg>
<div style="position:absolute;left:270px;top:427.76px;width:1373px;height:27.46px;background:#dedbe6"></div>
<div class="t" style="left:357.0px;width:35px;text-align:center;top:434.81px;font-size:14px;line-height:14px;font-weight:400;color:#000;letter-spacing:0.1px;">02</div>
<div style="position:absolute;left:400px;top:432.76px;width:115px;height:17.5px;background:#f3f3f4"></div>
<div class="t" style="left:401px;top:434.81px;font-size:14px;line-height:14px;font-weight:400;color:#000;letter-spacing:0.1px;">01.01.433</div>
<div class="t" style="left:524px;top:434.81px;font-size:14px;line-height:14px;font-weight:400;color:#000;letter-spacing:0.1px;">Bautafel</div>
<div style="position:absolute;left:1005px;top:432.76px;width:118px;height:17.5px;background:#f3f3f4"></div>
<div class="t" style="left:1013px;width:110px;text-align:right;top:434.81px;font-size:14px;line-height:14px;font-weight:400;color:#000;letter-spacing:0.1px;">4,50</div>
<div class="t" style="left:1132px;top:434.81px;font-size:14px;line-height:14px;font-weight:400;color:#000;letter-spacing:0.1px;">St</div>
<div style="position:absolute;left:1181px;top:432.76px;width:119px;height:17.5px;background:#f3f3f4"></div>
<div class="t" style="left:1190px;width:110px;text-align:right;top:434.81px;font-size:14px;line-height:14px;font-weight:400;color:#000;letter-spacing:0.1px;">22,80</div>
<div style="position:absolute;left:1309px;top:432.76px;width:49px;height:17.5px;background:#f3f3f4"></div>
<div style="position:absolute;left:1367px;top:432.76px;width:119px;height:17.5px;background:#f3f3f4"></div>
<div class="t" style="left:1376px;width:110px;text-align:right;top:434.81px;font-size:14px;line-height:14px;font-weight:400;color:#000;letter-spacing:0.1px;">102,60</div>
<div class="t" style="left:1501.5px;top:434.81px;font-size:14px;line-height:14px;font-weight:400;color:#000;letter-spacing:0.1px;">N</div>
<svg style="position:absolute;left:1518px;top:438.76px" width="10" height="7"><path d="M1 1.5 L5 5.5 L9 1.5" fill="none" stroke="#000" stroke-width="1.3"/></svg>
<svg style="position:absolute;left:1559px;top:434.76px" width="14" height="14" viewBox="0 0 14 14"><rect x="0" y="0" width="14" height="14" rx="2.5" fill="#005ce6"/><path d="M3.2 7.4 L5.9 10.1 L11 4" fill="none" stroke="#fff" stroke-width="2.1"/></svg>
<svg style="position:absolute;left:1609px;top:434.76px" width="14" height="14" viewBox="0 0 14 14"><rect x="1" y="1" width="12" height="12" rx="2" fill="#fff" stroke="#84848f" stroke-width="2"/></svg>
<svg style="position:absolute;left:282px;top:434.76px" width="14" height="14" viewBox="0 0 14 14"><rect x="1" y="1" width="12" height="12" rx="2" fill="#fff" stroke="#84848f" stroke-width="2"/></svg>
<div style="position:absolute;left:270px;top:455.22px;width:1373px;height:27.46px;background:#dedbe6"></div>
<div class="t" style="left:357.0px;width:35px;text-align:center;top:462.27px;font-size:14px;line-height:14px;font-weight:400;color:#000;letter-spacing:0.1px;">02</div>
<div style="position:absolute;left:400px;top:460.22px;width:115px;height:17.5px;background:#f3f3f4"></div>
<div class="t" style="left:401px;top:462.27px;font-size:14px;line-height:14px;font-weight:400;color:#000;letter-spacing:0.1px;">01.01.439</div>
<div class="t" style="left:524px;top:462.27px;font-size:14px;line-height:14px;font-weight:400;color:#000;letter-spacing:0.1px;">Container</div>
<div style="position:absolute;left:1005px;top:460.22px;width:118px;height:17.5px;background:#f3f3f4"></div>
<div class="t" style="left:1013px;width:110px;text-align:right;top:462.27px;font-size:14px;line-height:14px;font-weight:400;color:#000;letter-spacing:0.1px;">4,00</div>
<div class="t" style="left:1132px;top:462.27px;font-size:14px;line-height:14px;font-weight:400;color:#000;letter-spacing:0.1px;">Wo</div>
<div style="position:absolute;left:1181px;top:460.22px;width:119px;height:17.5px;background:#f3f3f4"></div>
<div class="t" style="left:1190px;width:110px;text-align:right;top:462.27px;font-size:14px;line-height:14px;font-weight:400;color:#000;letter-spacing:0.1px;">13,90</div>
<div style="position:absolute;left:1309px;top:460.22px;width:49px;height:17.5px;background:#f3f3f4"></div>
<div style="position:absolute;left:1367px;top:460.22px;width:119px;height:17.5px;background:#f3f3f4"></div>
<div class="t" style="left:1376px;width:110px;text-align:right;top:462.27px;font-size:14px;line-height:14px;font-weight:400;color:#000;letter-spacing:0.1px;">55,60</div>
<div class="t" style="left:1501.5px;top:462.27px;font-size:14px;line-height:14px;font-weight:400;color:#000;letter-spacing:0.1px;">E</div>
<svg style="position:absolute;left:1518px;top:466.22px" width="10" height="7"><path d="M1 1.5 L5 5.5 L9 1.5" fill="none" stroke="#000" stroke-width="1.3"/></svg>
<svg style="position:absolute;left:1559px;top:462.22px" width="14" height="14" viewBox="0 0 14 14"><rect x="1" y="1" width="12" height="12" rx="2" fill="#fff" stroke="#84848f" stroke-width="2"/></svg>
<svg style="position:absolute;left:1609px;top:462.22px" width="14" height="14" viewBox="0 0 14 14"><rect x="1" y="1" width="12" height="12" rx="2" fill="#fff" stroke="#84848f" stroke-width="2"/></svg>
<svg style="position:absolute;left:282px;top:462.22px" width="14" height="14" viewBox="0 0 14 14"><rect x="1" y="1" width="12" height="12" rx="2" fill="#fff" stroke="#84848f" stroke-width="2"/></svg>
<div style="position:absolute;left:270px;top:482.68px;width:1373px;height:27.46px;background:#dedbe6"></div>
<div class="t" style="left:357.0px;width:35px;text-align:center;top:489.73px;font-size:14px;line-height:14px;font-weight:400;color:#000;letter-spacing:0.1px;">02</div>
<div style="position:absolute;left:400px;top:487.68px;width:115px;height:17.5px;background:#f3f3f4"></div>
<div class="t" style="left:401px;top:489.73px;font-size:14px;line-height:14px;font-weight:400;color:#000;letter-spacing:0.1px;">01.31.400</div>
<div class="t" style="left:524px;top:489.73px;font-size:14px;line-height:14px;font-weight:400;color:#000;letter-spacing:0.1px;">Ger&uuml;st</div>
<div style="position:absolute;left:1005px;top:487.68px;width:118px;height:17.5px;background:#f3f3f4"></div>
<div class="t" style="left:1013px;width:110px;text-align:right;top:489.73px;font-size:14px;line-height:14px;font-weight:400;color:#000;letter-spacing:0.1px;">26,00</div>
<div class="t" style="left:1132px;top:489.73px;font-size:14px;line-height:14px;font-weight:400;color:#000;letter-spacing:0.1px;">m2</div>
<div style="position:absolute;left:1181px;top:487.68px;width:119px;height:17.5px;background:#f3f3f4"></div>
<div class="t" style="left:1190px;width:110px;text-align:right;top:489.73px;font-size:14px;line-height:14px;font-weight:400;color:#000;letter-spacing:0.1px;">10,00</div>
<div style="position:absolute;left:1309px;top:487.68px;width:49px;height:17.5px;background:#f3f3f4"></div>
<div style="position:absolute;left:1367px;top:487.68px;width:119px;height:17.5px;background:#f3f3f4"></div>
<div class="t" style="left:1376px;width:110px;text-align:right;top:489.73px;font-size:14px;line-height:14px;font-weight:400;color:#000;letter-spacing:0.1px;">260,00</div>
<div class="t" style="left:1501.5px;top:489.73px;font-size:14px;line-height:14px;font-weight:400;color:#000;letter-spacing:0.1px;">E</div>
<svg style="position:absolute;left:1518px;top:493.68px" width="10" height="7"><path d="M1 1.5 L5 5.5 L9 1.5" fill="none" stroke="#000" stroke-width="1.3"/></svg>
<svg style="position:absolute;left:1559px;top:489.68px" width="14" height="14" viewBox="0 0 14 14"><rect x="1" y="1" width="12" height="12" rx="2" fill="#fff" stroke="#84848f" stroke-width="2"/></svg>
<svg style="position:absolute;left:1609px;top:489.68px" width="14" height="14" viewBox="0 0 14 14"><rect x="1" y="1" width="12" height="12" rx="2" fill="#fff" stroke="#84848f" stroke-width="2"/></svg>
<svg style="position:absolute;left:282px;top:489.68px" width="14" height="14" viewBox="0 0 14 14"><rect x="1" y="1" width="12" height="12" rx="2" fill="#fff" stroke="#84848f" stroke-width="2"/></svg>
<div style="position:absolute;left:270px;top:510.14px;width:1373px;height:27.46px;background:#dedbe6"></div>
<div class="t" style="left:357.0px;width:35px;text-align:center;top:517.19px;font-size:14px;line-height:14px;font-weight:400;color:#000;letter-spacing:0.1px;">02</div>
<div style="position:absolute;left:400px;top:515.14px;width:115px;height:17.5px;background:#f3f3f4"></div>
<div class="t" style="left:401px;top:517.19px;font-size:14px;line-height:14px;font-weight:400;color:#000;letter-spacing:0.1px;">01.31.293</div>
<div class="t" style="left:524px;top:517.19px;font-size:14px;line-height:14px;font-weight:400;color:#000;letter-spacing:0.1px;">Ger&uuml;st Vorhaltung</div>
<div style="position:absolute;left:1005px;top:515.14px;width:118px;height:17.5px;background:#f3f3f4"></div>
<div class="t" style="left:1013px;width:110px;text-align:right;top:517.19px;font-size:14px;line-height:14px;font-weight:400;color:#000;letter-spacing:0.1px;">23,00</div>
<div class="t" style="left:1132px;top:517.19px;font-size:14px;line-height:14px;font-weight:400;color:#000;letter-spacing:0.1px;">m2</div>
<div style="position:absolute;left:1181px;top:515.14px;width:119px;height:17.5px;background:#f3f3f4"></div>
<div class="t" style="left:1190px;width:110px;text-align:right;top:517.19px;font-size:14px;line-height:14px;font-weight:400;color:#000;letter-spacing:0.1px;">11,20</div>
<div style="position:absolute;left:1309px;top:515.14px;width:49px;height:17.5px;background:#f3f3f4"></div>
<div style="position:absolute;left:1367px;top:515.14px;width:119px;height:17.5px;background:#f3f3f4"></div>
<div class="t" style="left:1376px;width:110px;text-align:right;top:517.19px;font-size:14px;line-height:14px;font-weight:400;color:#000;letter-spacing:0.1px;">257,60</div>
<div class="t" style="left:1501.5px;top:517.19px;font-size:14px;line-height:14px;font-weight:400;color:#000;letter-spacing:0.1px;">E</div>
<svg style="position:absolute;left:1518px;top:521.14px" width="10" height="7"><path d="M1 1.5 L5 5.5 L9 1.5" fill="none" stroke="#000" stroke-width="1.3"/></svg>
<svg style="position:absolute;left:1559px;top:517.14px" width="14" height="14" viewBox="0 0 14 14"><rect x="1" y="1" width="12" height="12" rx="2" fill="#fff" stroke="#84848f" stroke-width="2"/></svg>
<svg style="position:absolute;left:1609px;top:517.14px" width="14" height="14" viewBox="0 0 14 14"><rect x="1" y="1" width="12" height="12" rx="2" fill="#fff" stroke="#84848f" stroke-width="2"/></svg>
<svg style="position:absolute;left:282px;top:517.14px" width="14" height="14" viewBox="0 0 14 14"><rect x="1" y="1" width="12" height="12" rx="2" fill="#fff" stroke="#84848f" stroke-width="2"/></svg>
<div style="position:absolute;left:270px;top:537.6px;width:1373px;height:27.46px;background:#dedbe6"></div>
<div class="t" style="left:357.0px;width:35px;text-align:center;top:544.65px;font-size:14px;line-height:14px;font-weight:400;color:#000;letter-spacing:0.1px;">02</div>
<div style="position:absolute;left:400px;top:542.6px;width:115px;height:17.5px;background:#f3f3f4"></div>
<div class="t" style="left:401px;top:544.65px;font-size:14px;line-height:14px;font-weight:400;color:#000;letter-spacing:0.1px;">01.31.295</div>
<div class="t" style="left:524px;top:544.65px;font-size:14px;line-height:14px;font-weight:400;color:#000;letter-spacing:0.1px;">Schutznetz</div>
<div style="position:absolute;left:1005px;top:542.6px;width:118px;height:17.5px;background:#f3f3f4"></div>
<div class="t" style="left:1013px;width:110px;text-align:right;top:544.65px;font-size:14px;line-height:14px;font-weight:400;color:#000;letter-spacing:0.1px;">48,00</div>
<div class="t" style="left:1132px;top:544.65px;font-size:14px;line-height:14px;font-weight:400;color:#000;letter-spacing:0.1px;">m2</div>
<div style="position:absolute;left:1181px;top:542.6px;width:119px;height:17.5px;background:#f3f3f4"></div>
<div class="t" style="left:1190px;width:110px;text-align:right;top:544.65px;font-size:14px;line-height:14px;font-weight:400;color:#000;letter-spacing:0.1px;">16,80</div>
<div style="position:absolute;left:1309px;top:542.6px;width:49px;height:17.5px;background:#f3f3f4"></div>
<div style="position:absolute;left:1367px;top:542.6px;width:119px;height:17.5px;background:#f3f3f4"></div>
<div class="t" style="left:1376px;width:110px;text-align:right;top:544.65px;font-size:14px;line-height:14px;font-weight:400;color:#000;letter-spacing:0.1px;">806,40</div>
<div class="t" style="left:1501.5px;top:544.65px;font-size:14px;line-height:14px;font-weight:400;color:#000;letter-spacing:0.1px;">E</div>
<svg style="position:absolute;left:1518px;top:548.60px" width="10" height="7"><path d="M1 1.5 L5 5.5 L9 1.5" fill="none" stroke="#000" stroke-width="1.3"/></svg>
<svg style="position:absolute;left:1559px;top:544.60px" width="14" height="14" viewBox="0 0 14 14"><rect x="1" y="1" width="12" height="12" rx="2" fill="#fff" stroke="#84848f" stroke-width="2"/></svg>
<svg style="position:absolute;left:1609px;top:544.60px" width="14" height="14" viewBox="0 0 14 14"><rect x="1" y="1" width="12" height="12" rx="2" fill="#fff" stroke="#84848f" stroke-width="2"/></svg>
<svg style="position:absolute;left:282px;top:544.60px" width="14" height="14" viewBox="0 0 14 14"><rect x="1" y="1" width="12" height="12" rx="2" fill="#fff" stroke="#84848f" stroke-width="2"/></svg>
<div style="position:absolute;left:270px;top:565.06px;width:1373px;height:27.46px;background:#dedbe6"></div>
<div class="t" style="left:357.0px;width:35px;text-align:center;top:572.11px;font-size:14px;line-height:14px;font-weight:400;color:#000;letter-spacing:0.1px;">02</div>
<div style="position:absolute;left:400px;top:570.06px;width:115px;height:17.5px;background:#f3f3f4"></div>
<div class="t" style="left:401px;top:572.11px;font-size:14px;line-height:14px;font-weight:400;color:#000;letter-spacing:0.1px;">01.01.945</div>
<div class="t" style="left:524px;top:572.11px;font-size:14px;line-height:14px;font-weight:400;color:#000;letter-spacing:0.1px;">Regiestunden</div>
<div style="position:absolute;left:1005px;top:570.06px;width:118px;height:17.5px;background:#f3f3f4"></div>
<div class="t" style="left:1013px;width:110px;text-align:right;top:572.11px;font-size:14px;line-height:14px;font-weight:400;color:#000;letter-spacing:0.1px;">16,00</div>
<div class="t" style="left:1132px;top:572.11px;font-size:14px;line-height:14px;font-weight:400;color:#000;letter-spacing:0.1px;">h</div>
<div style="position:absolute;left:1181px;top:570.06px;width:119px;height:17.5px;background:#f3f3f4"></div>
<div class="t" style="left:1190px;width:110px;text-align:right;top:572.11px;font-size:14px;line-height:14px;font-weight:400;color:#000;letter-spacing:0.1px;">32,80</div>
<div style="position:absolute;left:1309px;top:570.06px;width:49px;height:17.5px;background:#f3f3f4"></div>
<div style="position:absolute;left:1367px;top:570.06px;width:119px;height:17.5px;background:#f3f3f4"></div>
<div class="t" style="left:1376px;width:110px;text-align:right;top:572.11px;font-size:14px;line-height:14px;font-weight:400;color:#000;letter-spacing:0.1px;">524,80</div>
<div class="t" style="left:1501.5px;top:572.11px;font-size:14px;line-height:14px;font-weight:400;color:#000;letter-spacing:0.1px;">N</div>
<svg style="position:absolute;left:1518px;top:576.06px" width="10" height="7"><path d="M1 1.5 L5 5.5 L9 1.5" fill="none" stroke="#000" stroke-width="1.3"/></svg>
<svg style="position:absolute;left:1559px;top:572.06px" width="14" height="14" viewBox="0 0 14 14"><rect x="0" y="0" width="14" height="14" rx="2.5" fill="#005ce6"/><path d="M3.2 7.4 L5.9 10.1 L11 4" fill="none" stroke="#fff" stroke-width="2.1"/></svg>
<svg style="position:absolute;left:1609px;top:572.06px" width="14" height="14" viewBox="0 0 14 14"><rect x="1" y="1" width="12" height="12" rx="2" fill="#fff" stroke="#84848f" stroke-width="2"/></svg>
<svg style="position:absolute;left:282px;top:572.06px" width="14" height="14" viewBox="0 0 14 14"><rect x="1" y="1" width="12" height="12" rx="2" fill="#fff" stroke="#84848f" stroke-width="2"/></svg>
<div style="position:absolute;left:270px;top:592.52px;width:1373px;height:27.46px;background:#a39cd7"></div>
<div style="position:absolute;left:357px;top:597.52px;width:35px;height:17.5px;background:#ffffff"></div>
<div class="t" style="left:357.0px;width:35px;text-align:center;top:599.57px;font-size:14px;line-height:14px;font-weight:400;color:#000;letter-spacing:0.1px;">03</div>
<div style="position:absolute;left:1309px;top:597.52px;width:49px;height:17.5px;background:#ffffff"></div>
<div style="position:absolute;left:524px;top:597.52px;width:472px;height:17.5px;background:#ededf1"></div>
<div class="t" style="left:525px;top:599.57px;font-size:14px;line-height:14px;font-weight:400;color:#000;letter-spacing:0.1px;">Erdarbeiten</div>
<svg style="position:absolute;left:282px;top:599.52px" width="14" height="14" viewBox="0 0 14 14"><rect x="1" y="1" width="12" height="12" rx="2" fill="#fff" stroke="#84848f" stroke-width="2"/></svg>
<div style="position:absolute;left:270px;top:619.98px;width:1373px;height:27.46px;background:#dedbe6"></div>
<div class="t" style="left:357.0px;width:35px;text-align:center;top:627.03px;font-size:14px;line-height:14px;font-weight:400;color:#000;letter-spacing:0.1px;">03</div>
<div style="position:absolute;left:400px;top:624.98px;width:115px;height:17.5px;background:#f3f3f4"></div>
<div class="t" style="left:401px;top:627.03px;font-size:14px;line-height:14px;font-weight:400;color:#000;letter-spacing:0.1px;">01.02.045</div>
<div class="t" style="left:524px;top:627.03px;font-size:14px;line-height:14px;font-weight:400;color:#000;letter-spacing:0.1px;">Aushub</div>
<div style="position:absolute;left:1005px;top:624.98px;width:118px;height:17.5px;background:#f3f3f4"></div>
<div class="t" style="left:1013px;width:110px;text-align:right;top:627.03px;font-size:14px;line-height:14px;font-weight:400;color:#000;letter-spacing:0.1px;">31,90</div>
<div class="t" style="left:1132px;top:627.03px;font-size:14px;line-height:14px;font-weight:400;color:#000;letter-spacing:0.1px;">m3</div>
<div style="position:absolute;left:1181px;top:624.98px;width:119px;height:17.5px;background:#f3f3f4"></div>
<div class="t" style="left:1190px;width:110px;text-align:right;top:627.03px;font-size:14px;line-height:14px;font-weight:400;color:#000;letter-spacing:0.1px;">16,60</div>
<div style="position:absolute;left:1309px;top:624.98px;width:49px;height:17.5px;background:#f3f3f4"></div>
<div style="position:absolute;left:1367px;top:624.98px;width:119px;height:17.5px;background:#f3f3f4"></div>
<div class="t" style="left:1376px;width:110px;text-align:right;top:627.03px;font-size:14px;line-height:14px;font-weight:400;color:#000;letter-spacing:0.1px;">529,54</div>
<div class="t" style="left:1501.5px;top:627.03px;font-size:14px;line-height:14px;font-weight:400;color:#000;letter-spacing:0.1px;">N</div>
<svg style="position:absolute;left:1518px;top:630.98px" width="10" height="7"><path d="M1 1.5 L5 5.5 L9 1.5" fill="none" stroke="#000" stroke-width="1.3"/></svg>
<svg style="position:absolute;left:1559px;top:626.98px" width="14" height="14" viewBox="0 0 14 14"><rect x="0" y="0" width="14" height="14" rx="2.5" fill="#005ce6"/><path d="M3.2 7.4 L5.9 10.1 L11 4" fill="none" stroke="#fff" stroke-width="2.1"/></svg>
<svg style="position:absolute;left:1609px;top:626.98px" width="14" height="14" viewBox="0 0 14 14"><rect x="1" y="1" width="12" height="12" rx="2" fill="#fff" stroke="#84848f" stroke-width="2"/></svg>
<svg style="position:absolute;left:282px;top:626.98px" width="14" height="14" viewBox="0 0 14 14"><rect x="1" y="1" width="12" height="12" rx="2" fill="#fff" stroke="#84848f" stroke-width="2"/></svg>
<div style="position:absolute;left:270px;top:647.44px;width:1373px;height:27.46px;background:#dedbe6"></div>
<div class="t" style="left:357.0px;width:35px;text-align:center;top:654.49px;font-size:14px;line-height:14px;font-weight:400;color:#000;letter-spacing:0.1px;">03</div>
<div style="position:absolute;left:400px;top:652.44px;width:115px;height:17.5px;background:#f3f3f4"></div>
<div class="t" style="left:401px;top:654.49px;font-size:14px;line-height:14px;font-weight:400;color:#000;letter-spacing:0.1px;">01.02.046</div>
<div class="t" style="left:524px;top:654.49px;font-size:14px;line-height:14px;font-weight:400;color:#000;letter-spacing:0.1px;">Aushub Fundamente</div>
<div style="position:absolute;left:1005px;top:652.44px;width:118px;height:17.5px;background:#f3f3f4"></div>
<div class="t" style="left:1013px;width:110px;text-align:right;top:654.49px;font-size:14px;line-height:14px;font-weight:400;color:#000;letter-spacing:0.1px;">20,20</div>
<div class="t" style="left:1132px;top:654.49px;font-size:14px;line-height:14px;font-weight:400;color:#000;letter-spacing:0.1px;">m3</div>
<div style="position:absolute;left:1181px;top:652.44px;width:119px;height:17.5px;background:#f3f3f4"></div>
<div class="t" style="left:1190px;width:110px;text-align:right;top:654.49px;font-size:14px;line-height:14px;font-weight:400;color:#000;letter-spacing:0.1px;">36,60</div>
<div style="position:absolute;left:1309px;top:652.44px;width:49px;height:17.5px;background:#f3f3f4"></div>
<div style="position:absolute;left:1367px;top:652.44px;width:119px;height:17.5px;background:#f3f3f4"></div>
<div class="t" style="left:1376px;width:110px;text-align:right;top:654.49px;font-size:14px;line-height:14px;font-weight:400;color:#000;letter-spacing:0.1px;">739,32</div>
<div class="t" style="left:1501.5px;top:654.49px;font-size:14px;line-height:14px;font-weight:400;color:#000;letter-spacing:0.1px;">N</div>
<svg style="position:absolute;left:1518px;top:658.44px" width="10" height="7"><path d="M1 1.5 L5 5.5 L9 1.5" fill="none" stroke="#000" stroke-width="1.3"/></svg>
<svg style="position:absolute;left:1559px;top:654.44px" width="14" height="14" viewBox="0 0 14 14"><rect x="0" y="0" width="14" height="14" rx="2.5" fill="#005ce6"/><path d="M3.2 7.4 L5.9 10.1 L11 4" fill="none" stroke="#fff" stroke-width="2.1"/></svg>
<svg style="position:absolute;left:1609px;top:654.44px" width="14" height="14" viewBox="0 0 14 14"><rect x="1" y="1" width="12" height="12" rx="2" fill="#fff" stroke="#84848f" stroke-width="2"/></svg>
<svg style="position:absolute;left:282px;top:654.44px" width="14" height="14" viewBox="0 0 14 14"><rect x="1" y="1" width="12" height="12" rx="2" fill="#fff" stroke="#84848f" stroke-width="2"/></svg>
<div style="position:absolute;left:270px;top:674.9000000000001px;width:1373px;height:27.46px;background:#dedbe6"></div>
<div class="t" style="left:357.0px;width:35px;text-align:center;top:681.95px;font-size:14px;line-height:14px;font-weight:400;color:#000;letter-spacing:0.1px;">03</div>
<div style="position:absolute;left:400px;top:679.9000000000001px;width:115px;height:17.5px;background:#f3f3f4"></div>
<div class="t" style="left:401px;top:681.95px;font-size:14px;line-height:14px;font-weight:400;color:#000;letter-spacing:0.1px;">01.02.086</div>
<div class="t" style="left:524px;top:681.95px;font-size:14px;line-height:14px;font-weight:400;color:#000;letter-spacing:0.1px;">Abtransport</div>
<div style="position:absolute;left:1005px;top:679.9000000000001px;width:118px;height:17.5px;background:#f3f3f4"></div>
<div class="t" style="left:1013px;width:110px;text-align:right;top:681.95px;font-size:14px;line-height:14px;font-weight:400;color:#000;letter-spacing:0.1px;">3,00</div>
<div class="t" style="left:1132px;top:681.95px;font-size:14px;line-height:14px;font-weight:400;color:#000;letter-spacing:0.1px;">PA</div>
<div style="position:absolute;left:1181px;top:679.9000000000001px;width:119px;height:17.5px;background:#f3f3f4"></div>
<div class="t" style="left:1190px;width:110px;text-align:right;top:681.95px;font-size:14px;line-height:14px;font-weight:400;color:#000;letter-spacing:0.1px;">250,00</div>
<div style="position:absolute;left:1309px;top:679.9000000000001px;width:49px;height:17.5px;background:#f3f3f4"></div>
<div style="position:absolute;left:1367px;top:679.9000000000001px;width:119px;height:17.5px;background:#f3f3f4"></div>
<div class="t" style="left:1376px;width:110px;text-align:right;top:681.95px;font-size:14px;line-height:14px;font-weight:400;color:#000;letter-spacing:0.1px;">750,00</div>
<div class="t" style="left:1501.5px;top:681.95px;font-size:14px;line-height:14px;font-weight:400;color:#000;letter-spacing:0.1px;">E</div>
<svg style="position:absolute;left:1518px;top:685.90px" width="10" height="7"><path d="M1 1.5 L5 5.5 L9 1.5" fill="none" stroke="#000" stroke-width="1.3"/></svg>
<svg style="position:absolute;left:1559px;top:681.90px" width="14" height="14" viewBox="0 0 14 14"><rect x="1" y="1" width="12" height="12" rx="2" fill="#fff" stroke="#84848f" stroke-width="2"/></svg>
<svg style="position:absolute;left:1609px;top:681.90px" width="14" height="14" viewBox="0 0 14 14"><rect x="1" y="1" width="12" height="12" rx="2" fill="#fff" stroke="#84848f" stroke-width="2"/></svg>
<svg style="position:absolute;left:282px;top:681.90px" width="14" height="14" viewBox="0 0 14 14"><rect x="1" y="1" width="12" height="12" rx="2" fill="#fff" stroke="#84848f" stroke-width="2"/></svg>
<div style="position:absolute;left:270px;top:702.36px;width:1373px;height:27.46px;background:#dedbe6"></div>
<div class="t" style="left:357.0px;width:35px;text-align:center;top:709.41px;font-size:14px;line-height:14px;font-weight:400;color:#000;letter-spacing:0.1px;">03</div>
<div style="position:absolute;left:400px;top:707.36px;width:115px;height:17.5px;background:#f3f3f4"></div>
<div class="t" style="left:401px;top:709.41px;font-size:14px;line-height:14px;font-weight:400;color:#000;letter-spacing:0.1px;">01.02.105</div>
<div class="t" style="left:524px;top:709.41px;font-size:14px;line-height:14px;font-weight:400;color:#000;letter-spacing:0.1px;">Hinterf&uuml;llung</div>
<div style="position:absolute;left:1005px;top:707.36px;width:118px;height:17.5px;background:#f3f3f4"></div>
<div class="t" style="left:1013px;width:110px;text-align:right;top:709.41px;font-size:14px;line-height:14px;font-weight:400;color:#000;letter-spacing:0.1px;">7,08</div>
<div class="t" style="left:1132px;top:709.41px;font-size:14px;line-height:14px;font-weight:400;color:#000;letter-spacing:0.1px;">m3</div>
<div style="position:absolute;left:1181px;top:707.36px;width:119px;height:17.5px;background:#f3f3f4"></div>
<div class="t" style="left:1190px;width:110px;text-align:right;top:709.41px;font-size:14px;line-height:14px;font-weight:400;color:#000;letter-spacing:0.1px;">24,90</div>
<div style="position:absolute;left:1309px;top:707.36px;width:49px;height:17.5px;background:#f3f3f4"></div>
<div style="position:absolute;left:1367px;top:707.36px;width:119px;height:17.5px;background:#f3f3f4"></div>
<div class="t" style="left:1376px;width:110px;text-align:right;top:709.41px;font-size:14px;line-height:14px;font-weight:400;color:#000;letter-spacing:0.1px;">176,29</div>
<div class="t" style="left:1501.5px;top:709.41px;font-size:14px;line-height:14px;font-weight:400;color:#000;letter-spacing:0.1px;">N</div>
<svg style="position:absolute;left:1518px;top:713.36px" width="10" height="7"><path d="M1 1.5 L5 5.5 L9 1.5" fill="none" stroke="#000" stroke-width="1.3"/></svg>
<svg style="position:absolute;left:1559px;top:709.36px" width="14" height="14" viewBox="0 0 14 14"><rect x="0" y="0" width="14" height="14" rx="2.5" fill="#005ce6"/><path d="M3.2 7.4 L5.9 10.1 L11 4" fill="none" stroke="#fff" stroke-width="2.1"/></svg>
<svg style="position:absolute;left:1609px;top:709.36px" width="14" height="14" viewBox="0 0 14 14"><rect x="1" y="1" width="12" height="12" rx="2" fill="#fff" stroke="#84848f" stroke-width="2"/></svg>
<svg style="position:absolute;left:282px;top:709.36px" width="14" height="14" viewBox="0 0 14 14"><rect x="1" y="1" width="12" height="12" rx="2" fill="#fff" stroke="#84848f" stroke-width="2"/></svg>
<div style="position:absolute;left:270px;top:729.8199999999999px;width:1373px;height:27.46px;background:#dedbe6"></div>
<div class="t" style="left:357.0px;width:35px;text-align:center;top:736.87px;font-size:14px;line-height:14px;font-weight:400;color:#000;letter-spacing:0.1px;">03</div>
<div style="position:absolute;left:400px;top:734.8199999999999px;width:115px;height:17.5px;background:#f3f3f4"></div>
<div class="t" style="left:401px;top:736.87px;font-size:14px;line-height:14px;font-weight:400;color:#000;letter-spacing:0.1px;">01.02.387</div>
<div class="t" style="left:524px;top:736.87px;font-size:14px;line-height:14px;font-weight:400;color:#000;letter-spacing:0.1px;">Rollierung</div>
<div style="position:absolute;left:1005px;top:734.8199999999999px;width:118px;height:17.5px;background:#f3f3f4"></div>
<div class="t" style="left:1013px;width:110px;text-align:right;top:736.87px;font-size:14px;line-height:14px;font-weight:400;color:#000;letter-spacing:0.1px;">45,60</div>
<div class="t" style="left:1132px;top:736.87px;font-size:14px;line-height:14px;font-weight:400;color:#000;letter-spacing:0.1px;">m2</div>
<div style="position:absolute;left:1181px;top:734.8199999999999px;width:119px;height:17.5px;background:#f3f3f4"></div>
<div class="t" style="left:1190px;width:110px;text-align:right;top:736.87px;font-size:14px;line-height:14px;font-weight:400;color:#000;letter-spacing:0.1px;">3,21</div>
<div style="position:absolute;left:1309px;top:734.8199999999999px;width:49px;height:17.5px;background:#f3f3f4"></div>
<div style="position:absolute;left:1367px;top:734.8199999999999px;width:119px;height:17.5px;background:#f3f3f4"></div>
<div class="t" style="left:1376px;width:110px;text-align:right;top:736.87px;font-size:14px;line-height:14px;font-weight:400;color:#000;letter-spacing:0.1px;">146,38</div>
<div class="t" style="left:1501.5px;top:736.87px;font-size:14px;line-height:14px;font-weight:400;color:#000;letter-spacing:0.1px;">N</div>
<svg style="position:absolute;left:1518px;top:740.82px" width="10" height="7"><path d="M1 1.5 L5 5.5 L9 1.5" fill="none" stroke="#000" stroke-width="1.3"/></svg>
<svg style="position:absolute;left:1559px;top:736.82px" width="14" height="14" viewBox="0 0 14 14"><rect x="0" y="0" width="14" height="14" rx="2.5" fill="#005ce6"/><path d="M3.2 7.4 L5.9 10.1 L11 4" fill="none" stroke="#fff" stroke-width="2.1"/></svg>
<svg style="position:absolute;left:1609px;top:736.82px" width="14" height="14" viewBox="0 0 14 14"><rect x="1" y="1" width="12" height="12" rx="2" fill="#fff" stroke="#84848f" stroke-width="2"/></svg>
<svg style="position:absolute;left:282px;top:736.82px" width="14" height="14" viewBox="0 0 14 14"><rect x="1" y="1" width="12" height="12" rx="2" fill="#fff" stroke="#84848f" stroke-width="2"/></svg>
<div style="position:absolute;left:270px;top:757.28px;width:1373px;height:27.46px;background:#dedbe6"></div>
<div class="t" style="left:357.0px;width:35px;text-align:center;top:764.33px;font-size:14px;line-height:14px;font-weight:400;color:#000;letter-spacing:0.1px;">03</div>
<div style="position:absolute;left:400px;top:762.28px;width:115px;height:17.5px;background:#f3f3f4"></div>
<div class="t" style="left:401px;top:764.33px;font-size:14px;line-height:14px;font-weight:400;color:#000;letter-spacing:0.1px;">01.02.391</div>
<div class="t" style="left:524px;top:764.33px;font-size:14px;line-height:14px;font-weight:400;color:#000;letter-spacing:0.1px;">Vlies</div>
<div style="position:absolute;left:1005px;top:762.28px;width:118px;height:17.5px;background:#f3f3f4"></div>
<div class="t" style="left:1013px;width:110px;text-align:right;top:764.33px;font-size:14px;line-height:14px;font-weight:400;color:#000;letter-spacing:0.1px;">45,60</div>
<div class="t" style="left:1132px;top:764.33px;font-size:14px;line-height:14px;font-weight:400;color:#000;letter-spacing:0.1px;">m2</div>
<div style="position:absolute;left:1181px;top:762.28px;width:119px;height:17.5px;background:#f3f3f4"></div>
<div class="t" style="left:1190px;width:110px;text-align:right;top:764.33px;font-size:14px;line-height:14px;font-weight:400;color:#000;letter-spacing:0.1px;">4,75</div>
<div style="position:absolute;left:1309px;top:762.28px;width:49px;height:17.5px;background:#f3f3f4"></div>
<div style="position:absolute;left:1367px;top:762.28px;width:119px;height:17.5px;background:#f3f3f4"></div>
<div class="t" style="left:1376px;width:110px;text-align:right;top:764.33px;font-size:14px;line-height:14px;font-weight:400;color:#000;letter-spacing:0.1px;">216,60</div>
<div class="t" style="left:1501.5px;top:764.33px;font-size:14px;line-height:14px;font-weight:400;color:#000;letter-spacing:0.1px;">E</div>
<svg style="position:absolute;left:1518px;top:768.28px" width="10" height="7"><path d="M1 1.5 L5 5.5 L9 1.5" fill="none" stroke="#000" stroke-width="1.3"/></svg>
<svg style="position:absolute;left:1559px;top:764.28px" width="14" height="14" viewBox="0 0 14 14"><rect x="1" y="1" width="12" height="12" rx="2" fill="#fff" stroke="#84848f" stroke-width="2"/></svg>
<svg style="position:absolute;left:1609px;top:764.28px" width="14" height="14" viewBox="0 0 14 14"><rect x="1" y="1" width="12" height="12" rx="2" fill="#fff" stroke="#84848f" stroke-width="2"/></svg>
<svg style="position:absolute;left:282px;top:764.28px" width="14" height="14" viewBox="0 0 14 14"><rect x="1" y="1" width="12" height="12" rx="2" fill="#fff" stroke="#84848f" stroke-width="2"/></svg>
<div style="position:absolute;left:270px;top:784.74px;width:1373px;height:27.46px;background:#dedbe6"></div>
<div class="t" style="left:357.0px;width:35px;text-align:center;top:791.79px;font-size:14px;line-height:14px;font-weight:400;color:#000;letter-spacing:0.1px;">03</div>
<div style="position:absolute;left:400px;top:789.74px;width:115px;height:17.5px;background:#f3f3f4"></div>
<div class="t" style="left:401px;top:791.79px;font-size:14px;line-height:14px;font-weight:400;color:#000;letter-spacing:0.1px;">01.02.301</div>
<div class="t" style="left:524px;top:791.79px;font-size:14px;line-height:14px;font-weight:400;color:#000;letter-spacing:0.1px;">Planum</div>
<div style="position:absolute;left:1005px;top:789.74px;width:118px;height:17.5px;background:#f3f3f4"></div>
<div class="t" style="left:1013px;width:110px;text-align:right;top:791.79px;font-size:14px;line-height:14px;font-weight:400;color:#000;letter-spacing:0.1px;">22,00</div>
<div class="t" style="left:1132px;top:791.79px;font-size:14px;line-height:14px;font-weight:400;color:#000;letter-spacing:0.1px;">m2</div>
<div style="position:absolute;left:1181px;top:789.74px;width:119px;height:17.5px;background:#f3f3f4"></div>
<div class="t" style="left:1190px;width:110px;text-align:right;top:791.79px;font-size:14px;line-height:14px;font-weight:400;color:#000;letter-spacing:0.1px;">4,99</div>
<div style="position:absolute;left:1309px;top:789.74px;width:49px;height:17.5px;background:#f3f3f4"></div>
<div style="position:absolute;left:1367px;top:789.74px;width:119px;height:17.5px;background:#f3f3f4"></div>
<div class="t" style="left:1376px;width:110px;text-align:right;top:791.79px;font-size:14px;line-height:14px;font-weight:400;color:#000;letter-spacing:0.1px;">109,78</div>
<div class="t" style="left:1501.5px;top:791.79px;font-size:14px;line-height:14px;font-weight:400;color:#000;letter-spacing:0.1px;">N</div>
<svg style="position:absolute;left:1518px;top:795.74px" width="10" height="7"><path d="M1 1.5 L5 5.5 L9 1.5" fill="none" stroke="#000" stroke-width="1.3"/></svg>
<svg style="position:absolute;left:1559px;top:791.74px" width="14" height="14" viewBox="0 0 14 14"><rect x="0" y="0" width="14" height="14" rx="2.5" fill="#005ce6"/><path d="M3.2 7.4 L5.9 10.1 L11 4" fill="none" stroke="#fff" stroke-width="2.1"/></svg>
<svg style="position:absolute;left:1609px;top:791.74px" width="14" height="14" viewBox="0 0 14 14"><rect x="1" y="1" width="12" height="12" rx="2" fill="#fff" stroke="#84848f" stroke-width="2"/></svg>
<svg style="position:absolute;left:282px;top:791.74px" width="14" height="14" viewBox="0 0 14 14"><rect x="1" y="1" width="12" height="12" rx="2" fill="#fff" stroke="#84848f" stroke-width="2"/></svg>
<div style="position:absolute;left:270px;top:812.2px;width:1373px;height:27.46px;background:#dedbe6"></div>
<div class="t" style="left:357.0px;width:35px;text-align:center;top:819.25px;font-size:14px;line-height:14px;font-weight:400;color:#000;letter-spacing:0.1px;">03</div>
<div style="position:absolute;left:400px;top:817.2px;width:115px;height:17.5px;background:#f3f3f4"></div>
<div class="t" style="left:401px;top:819.25px;font-size:14px;line-height:14px;font-weight:400;color:#000;letter-spacing:0.1px;">01.01.945</div>
<div class="t" style="left:524px;top:819.25px;font-size:14px;line-height:14px;font-weight:400;color:#000;letter-spacing:0.1px;">Regiestunden</div>
<div style="position:absolute;left:1005px;top:817.2px;width:118px;height:17.5px;background:#f3f3f4"></div>
<div class="t" style="left:1013px;width:110px;text-align:right;top:819.25px;font-size:14px;line-height:14px;font-weight:400;color:#000;letter-spacing:0.1px;">56,00</div>
<div class="t" style="left:1132px;top:819.25px;font-size:14px;line-height:14px;font-weight:400;color:#000;letter-spacing:0.1px;">h</div>
<div style="position:absolute;left:1181px;top:817.2px;width:119px;height:17.5px;background:#f3f3f4"></div>
<div class="t" style="left:1190px;width:110px;text-align:right;top:819.25px;font-size:14px;line-height:14px;font-weight:400;color:#000;letter-spacing:0.1px;">32,80</div>
<div style="position:absolute;left:1309px;top:817.2px;width:49px;height:17.5px;background:#f3f3f4"></div>
<div style="position:absolute;left:1367px;top:817.2px;width:119px;height:17.5px;background:#f3f3f4"></div>
<div class="t" style="left:1376px;width:110px;text-align:right;top:819.25px;font-size:14px;line-height:14px;font-weight:400;color:#000;letter-spacing:0.1px;">1836,80</div>
<div class="t" style="left:1501.5px;top:819.25px;font-size:14px;line-height:14px;font-weight:400;color:#000;letter-spacing:0.1px;">N</div>
<svg style="position:absolute;left:1518px;top:823.20px" width="10" height="7"><path d="M1 1.5 L5 5.5 L9 1.5" fill="none" stroke="#000" stroke-width="1.3"/></svg>
<svg style="position:absolute;left:1559px;top:819.20px" width="14" height="14" viewBox="0 0 14 14"><rect x="0" y="0" width="14" height="14" rx="2.5" fill="#005ce6"/><path d="M3.2 7.4 L5.9 10.1 L11 4" fill="none" stroke="#fff" stroke-width="2.1"/></svg>
<svg style="position:absolute;left:1609px;top:819.20px" width="14" height="14" viewBox="0 0 14 14"><rect x="1" y="1" width="12" height="12" rx="2" fill="#fff" stroke="#84848f" stroke-width="2"/></svg>
<svg style="position:absolute;left:282px;top:819.20px" width="14" height="14" viewBox="0 0 14 14"><rect x="1" y="1" width="12" height="12" rx="2" fill="#fff" stroke="#84848f" stroke-width="2"/></svg>
<div style="position:absolute;left:270px;top:839.66px;width:1373px;height:27.46px;background:#a39cd7"></div>
<div style="position:absolute;left:357px;top:844.66px;width:35px;height:17.5px;background:#ffffff"></div>
<div class="t" style="left:357.0px;width:35px;text-align:center;top:846.71px;font-size:14px;line-height:14px;font-weight:400;color:#000;letter-spacing:0.1px;">04</div>
<div style="position:absolute;left:1309px;top:844.66px;width:49px;height:17.5px;background:#ffffff"></div>
<div style="position:absolute;left:524px;top:844.66px;width:472px;height:17.5px;background:#ededf1"></div>
<div class="t" style="left:525px;top:846.71px;font-size:14px;line-height:14px;font-weight:400;color:#000;letter-spacing:0.1px;">Rohbau</div>
<svg style="position:absolute;left:282px;top:846.66px" width="14" height="14" viewBox="0 0 14 14"><rect x="1" y="1" width="12" height="12" rx="2" fill="#fff" stroke="#84848f" stroke-width="2"/></svg>
<div style="position:absolute;left:270px;top:867.12px;width:1373px;height:27.46px;background:#dedbe6"></div>
<div class="t" style="left:357.0px;width:35px;text-align:center;top:874.17px;font-size:14px;line-height:14px;font-weight:400;color:#000;letter-spacing:0.1px;">04</div>
<div style="position:absolute;left:400px;top:872.12px;width:115px;height:17.5px;background:#f3f3f4"></div>
<div class="t" style="left:401px;top:874.17px;font-size:14px;line-height:14px;font-weight:400;color:#000;letter-spacing:0.1px;">01.03.003</div>
<div class="t" style="left:524px;top:874.17px;font-size:14px;line-height:14px;font-weight:400;color:#000;letter-spacing:0.1px;">Fundamentbeton C20/25,</div>
<div style="position:absolute;left:1005px;top:872.12px;width:118px;height:17.5px;background:#f3f3f4"></div>
<div class="t" style="left:1013px;width:110px;text-align:right;top:874.17px;font-size:14px;line-height:14px;font-weight:400;color:#000;letter-spacing:0.1px;">3,54</div>
<div class="t" style="left:1132px;top:874.17px;font-size:14px;line-height:14px;font-weight:400;color:#000;letter-spacing:0.1px;">m3</div>
<div style="position:absolute;left:1181px;top:872.12px;width:119px;height:17.5px;background:#f3f3f4"></div>
<div class="t" style="left:1190px;width:110px;text-align:right;top:874.17px;font-size:14px;line-height:14px;font-weight:400;color:#000;letter-spacing:0.1px;">294,00</div>
<div style="position:absolute;left:1309px;top:872.12px;width:49px;height:17.5px;background:#f3f3f4"></div>
<div style="position:absolute;left:1367px;top:872.12px;width:119px;height:17.5px;background:#f3f3f4"></div>
<div class="t" style="left:1376px;width:110px;text-align:right;top:874.17px;font-size:14px;line-height:14px;font-weight:400;color:#000;letter-spacing:0.1px;">1040,76</div>
<div class="t" style="left:1501.5px;top:874.17px;font-size:14px;line-height:14px;font-weight:400;color:#000;letter-spacing:0.1px;">N</div>
<svg style="position:absolute;left:1518px;top:878.12px" width="10" height="7"><path d="M1 1.5 L5 5.5 L9 1.5" fill="none" stroke="#000" stroke-width="1.3"/></svg>
<svg style="position:absolute;left:1559px;top:874.12px" width="14" height="14" viewBox="0 0 14 14"><rect x="0" y="0" width="14" height="14" rx="2.5" fill="#005ce6"/><path d="M3.2 7.4 L5.9 10.1 L11 4" fill="none" stroke="#fff" stroke-width="2.1"/></svg>
<svg style="position:absolute;left:1609px;top:874.12px" width="14" height="14" viewBox="0 0 14 14"><rect x="1" y="1" width="12" height="12" rx="2" fill="#fff" stroke="#84848f" stroke-width="2"/></svg>
<svg style="position:absolute;left:282px;top:874.12px" width="14" height="14" viewBox="0 0 14 14"><rect x="1" y="1" width="12" height="12" rx="2" fill="#fff" stroke="#84848f" stroke-width="2"/></svg>
<div style="position:absolute;left:270px;top:894.58px;width:1373px;height:27.46px;background:#dedbe6"></div>
<div class="t" style="left:357.0px;width:35px;text-align:center;top:901.63px;font-size:14px;line-height:14px;font-weight:400;color:#000;letter-spacing:0.1px;">04</div>
<div style="position:absolute;left:400px;top:899.58px;width:115px;height:17.5px;background:#f3f3f4"></div>
<div class="t" style="left:401px;top:901.63px;font-size:14px;line-height:14px;font-weight:400;color:#000;letter-spacing:0.1px;">01.03.040</div>
<div class="t" style="left:524px;top:901.63px;font-size:14px;line-height:14px;font-weight:400;color:#000;letter-spacing:0.1px;">Schalung f&uuml;r Fundamente aus rauhen Brettern</div>
<div style="position:absolute;left:1005px;top:899.58px;width:118px;height:17.5px;background:#f3f3f4"></div>
<div class="t" style="left:1013px;width:110px;text-align:right;top:901.63px;font-size:14px;line-height:14px;font-weight:400;color:#000;letter-spacing:0.1px;">5,66</div>
<div class="t" style="left:1132px;top:901.63px;font-size:14px;line-height:14px;font-weight:400;color:#000;letter-spacing:0.1px;">m2</div>
<div style="position:absolute;left:1181px;top:899.58px;width:119px;height:17.5px;background:#f3f3f4"></div>
<div class="t" style="left:1190px;width:110px;text-align:right;top:901.63px;font-size:14px;line-height:14px;font-weight:400;color:#000;letter-spacing:0.1px;">34,50</div>
<div style="position:absolute;left:1309px;top:899.58px;width:49px;height:17.5px;background:#f3f3f4"></div>
<div style="position:absolute;left:1367px;top:899.58px;width:119px;height:17.5px;background:#f3f3f4"></div>
<div class="t" style="left:1376px;width:110px;text-align:right;top:901.63px;font-size:14px;line-height:14px;font-weight:400;color:#000;letter-spacing:0.1px;">195,27</div>
<div class="t" style="left:1501.5px;top:901.63px;font-size:14px;line-height:14px;font-weight:400;color:#000;letter-spacing:0.1px;">E</div>
<svg style="position:absolute;left:1518px;top:905.58px" width="10" height="7"><path d="M1 1.5 L5 5.5 L9 1.5" fill="none" stroke="#000" stroke-width="1.3"/></svg>
<svg style="position:absolute;left:1559px;top:901.58px" width="14" height="14" viewBox="0 0 14 14"><rect x="1" y="1" width="12" height="12" rx="2" fill="#fff" stroke="#84848f" stroke-width="2"/></svg>
<svg style="position:absolute;left:1609px;top:901.58px" width="14" height="14" viewBox="0 0 14 14"><rect x="1" y="1" width="12" height="12" rx="2" fill="#fff" stroke="#84848f" stroke-width="2"/></svg>
<svg style="position:absolute;left:282px;top:901.58px" width="14" height="14" viewBox="0 0 14 14"><rect x="1" y="1" width="12" height="12" rx="2" fill="#fff" stroke="#84848f" stroke-width="2"/></svg>
<div style="position:absolute;left:270px;top:922.04px;width:1373px;height:27.46px;background:#dedbe6"></div>
<div class="t" style="left:357.0px;width:35px;text-align:center;top:929.09px;font-size:14px;line-height:14px;font-weight:400;color:#000;letter-spacing:0.1px;">04</div>
<div style="position:absolute;left:400px;top:927.04px;width:115px;height:17.5px;background:#f3f3f4"></div>
<div class="t" style="left:401px;top:929.09px;font-size:14px;line-height:14px;font-weight:400;color:#000;letter-spacing:0.1px;">01.03.060</div>
<div class="t" style="left:524px;top:929.09px;font-size:14px;line-height:14px;font-weight:400;color:#000;letter-spacing:0.1px;">Bewehrung f&uuml;r Fundamente mit RST 50,</div>
<div style="position:absolute;left:1005px;top:927.04px;width:118px;height:17.5px;background:#f6dbdb"></div>
<div class="t" style="left:1013px;width:110px;text-align:right;top:929.09px;font-size:14px;line-height:14px;font-weight:400;color:#000;letter-spacing:0.1px;">72,40</div>
<div class="t" style="left:1132px;top:929.09px;font-size:14px;line-height:14px;font-weight:400;color:#000;letter-spacing:0.1px;">kg</div>
<div style="position:absolute;left:1181px;top:927.04px;width:119px;height:17.5px;background:#f3f3f4"></div>
<div class="t" style="left:1190px;width:110px;text-align:right;top:929.09px;font-size:14px;line-height:14px;font-weight:400;color:#000;letter-spacing:0.1px;">2,33</div>
<div style="position:absolute;left:1309px;top:927.04px;width:49px;height:17.5px;background:#f3f3f4"></div>
<div style="position:absolute;left:1367px;top:927.04px;width:119px;height:17.5px;background:#f3f3f4"></div>
<div class="t" style="left:1376px;width:110px;text-align:right;top:929.09px;font-size:14px;line-height:14px;font-weight:400;color:#000;letter-spacing:0.1px;">168,69</div>
<div class="t" style="left:1501.5px;top:929.09px;font-size:14px;line-height:14px;font-weight:400;color:#000;letter-spacing:0.1px;">N</div>
<svg style="position:absolute;left:1518px;top:933.04px" width="10" height="7"><path d="M1 1.5 L5 5.5 L9 1.5" fill="none" stroke="#000" stroke-width="1.3"/></svg>
<svg style="position:absolute;left:1559px;top:929.04px" width="14" height="14" viewBox="0 0 14 14"><rect x="0" y="0" width="14" height="14" rx="2.5" fill="#005ce6"/><path d="M3.2 7.4 L5.9 10.1 L11 4" fill="none" stroke="#fff" stroke-width="2.1"/></svg>
<svg style="position:absolute;left:1609px;top:929.04px" width="14" height="14" viewBox="0 0 14 14"><rect x="1" y="1" width="12" height="12" rx="2" fill="#fff" stroke="#84848f" stroke-width="2"/></svg>
<svg style="position:absolute;left:282px;top:929.04px" width="14" height="14" viewBox="0 0 14 14"><rect x="1" y="1" width="12" height="12" rx="2" fill="#fff" stroke="#84848f" stroke-width="2"/></svg>
<div style="position:absolute;left:270px;top:949.5px;width:1373px;height:27.46px;background:#dedbe6"></div>
<div class="t" style="left:357.0px;width:35px;text-align:center;top:956.55px;font-size:14px;line-height:14px;font-weight:400;color:#000;letter-spacing:0.1px;">04</div>
<div style="position:absolute;left:400px;top:954.5px;width:115px;height:17.5px;background:#f3f3f4"></div>
<div class="t" style="left:401px;top:956.55px;font-size:14px;line-height:14px;font-weight:400;color:#000;letter-spacing:0.1px;">01.03.413</div>
<div class="t" style="left:524px;top:956.55px;font-size:14px;line-height:14px;font-weight:400;color:#000;letter-spacing:0.1px;">Schalsteinmauerwerk 25cm, F&uuml;llbeton C16/20,</div>
<div style="position:absolute;left:1005px;top:954.5px;width:118px;height:17.5px;background:#f6dbdb"></div>
<div class="t" style="left:1013px;width:110px;text-align:right;top:956.55px;font-size:14px;line-height:14px;font-weight:400;color:#000;letter-spacing:0.1px;">45,50</div>
<div class="t" style="left:1132px;top:956.55px;font-size:14px;line-height:14px;font-weight:400;color:#000;letter-spacing:0.1px;">m2</div>
<div style="position:absolute;left:1181px;top:954.5px;width:119px;height:17.5px;background:#f3f3f4"></div>
<div class="t" style="left:1190px;width:110px;text-align:right;top:956.55px;font-size:14px;line-height:14px;font-weight:400;color:#000;letter-spacing:0.1px;">79,00</div>
<div style="position:absolute;left:1309px;top:954.5px;width:49px;height:17.5px;background:#f3f3f4"></div>
<div style="position:absolute;left:1367px;top:954.5px;width:119px;height:17.5px;background:#f3f3f4"></div>
<div class="t" style="left:1376px;width:110px;text-align:right;top:956.55px;font-size:14px;line-height:14px;font-weight:400;color:#000;letter-spacing:0.1px;">3594,50</div>
<div class="t" style="left:1501.5px;top:956.55px;font-size:14px;line-height:14px;font-weight:400;color:#000;letter-spacing:0.1px;">N</div>
<svg style="position:absolute;left:1518px;top:960.50px" width="10" height="7"><path d="M1 1.5 L5 5.5 L9 1.5" fill="none" stroke="#000" stroke-width="1.3"/></svg>
<svg style="position:absolute;left:1559px;top:956.50px" width="14" height="14" viewBox="0 0 14 14"><rect x="0" y="0" width="14" height="14" rx="2.5" fill="#005ce6"/><path d="M3.2 7.4 L5.9 10.1 L11 4" fill="none" stroke="#fff" stroke-width="2.1"/></svg>
<svg style="position:absolute;left:1609px;top:956.50px" width="14" height="14" viewBox="0 0 14 14"><rect x="1" y="1" width="12" height="12" rx="2" fill="#fff" stroke="#84848f" stroke-width="2"/></svg>
<svg style="position:absolute;left:282px;top:956.50px" width="14" height="14" viewBox="0 0 14 14"><rect x="1" y="1" width="12" height="12" rx="2" fill="#fff" stroke="#84848f" stroke-width="2"/></svg>
<div style="position:absolute;left:270px;top:976.96px;width:1373px;height:27.46px;background:#dedbe6"></div>
<div class="t" style="left:357.0px;width:35px;text-align:center;top:984.01px;font-size:14px;line-height:14px;font-weight:400;color:#000;letter-spacing:0.1px;">04</div>
<div style="position:absolute;left:400px;top:981.96px;width:115px;height:17.5px;background:#f3f3f4"></div>
<div class="t" style="left:401px;top:984.01px;font-size:14px;line-height:14px;font-weight:400;color:#000;letter-spacing:0.1px;">01.03.622</div>
<div class="t" style="left:524px;top:984.01px;font-size:14px;line-height:14px;font-weight:400;color:#000;letter-spacing:0.1px;">Horizontalabdichtung der Mauern, 0,4</div>
<div style="position:absolute;left:1005px;top:981.96px;width:118px;height:17.5px;background:#f3f3f4"></div>
<div class="t" style="left:1013px;width:110px;text-align:right;top:984.01px;font-size:14px;line-height:14px;font-weight:400;color:#000;letter-spacing:0.1px;">7,00</div>
<div class="t" style="left:1132px;top:984.01px;font-size:14px;line-height:14px;font-weight:400;color:#000;letter-spacing:0.1px;">m2</div>
<div style="position:absolute;left:1181px;top:981.96px;width:119px;height:17.5px;background:#f3f3f4"></div>
<div class="t" style="left:1190px;width:110px;text-align:right;top:984.01px;font-size:14px;line-height:14px;font-weight:400;color:#000;letter-spacing:0.1px;">11,70</div>
<div style="position:absolute;left:1309px;top:981.96px;width:49px;height:17.5px;background:#f3f3f4"></div>
<div style="position:absolute;left:1367px;top:981.96px;width:119px;height:17.5px;background:#f3f3f4"></div>
<div class="t" style="left:1376px;width:110px;text-align:right;top:984.01px;font-size:14px;line-height:14px;font-weight:400;color:#000;letter-spacing:0.1px;">585,00</div>
<div class="t" style="left:1501.5px;top:984.01px;font-size:14px;line-height:14px;font-weight:400;color:#000;letter-spacing:0.1px;">N</div>
<svg style="position:absolute;left:1518px;top:987.96px" width="10" height="7"><path d="M1 1.5 L5 5.5 L9 1.5" fill="none" stroke="#000" stroke-width="1.3"/></svg>
<svg style="position:absolute;left:1559px;top:983.96px" width="14" height="14" viewBox="0 0 14 14"><rect x="0" y="0" width="14" height="14" rx="2.5" fill="#005ce6"/><path d="M3.2 7.4 L5.9 10.1 L11 4" fill="none" stroke="#fff" stroke-width="2.1"/></svg>
<svg style="position:absolute;left:1609px;top:983.96px" width="14" height="14" viewBox="0 0 14 14"><rect x="1" y="1" width="12" height="12" rx="2" fill="#fff" stroke="#84848f" stroke-width="2"/></svg>
<svg style="position:absolute;left:282px;top:983.96px" width="14" height="14" viewBox="0 0 14 14"><rect x="1" y="1" width="12" height="12" rx="2" fill="#fff" stroke="#84848f" stroke-width="2"/></svg>
<div style="position:absolute;left:270px;top:290.46px;width:1373px;height:0px;border-top:1px dotted #000"></div>
<div style="position:absolute;left:270px;top:317.92px;width:1373px;height:0px;border-top:1px dotted #000"></div>
<div style="position:absolute;left:270px;top:345.38px;width:1373px;height:0px;border-top:1px dotted #000"></div>
<div style="position:absolute;left:270px;top:372.84000000000003px;width:1373px;height:0px;border-top:1px dotted #000"></div>
<div style="position:absolute;left:270px;top:400.3px;width:1373px;height:0px;border-top:1px dotted #000"></div>
<div style="position:absolute;left:270px;top:427.76px;width:1373px;height:0px;border-top:1px dotted #000"></div>
<div style="position:absolute;left:270px;top:455.22px;width:1373px;height:0px;border-top:1px dotted #000"></div>
<div style="position:absolute;left:270px;top:482.68px;width:1373px;height:0px;border-top:1px dotted #000"></div>
<div style="position:absolute;left:270px;top:510.14px;width:1373px;height:0px;border-top:1px dotted #000"></div>
<div style="position:absolute;left:270px;top:537.6px;width:1373px;height:0px;border-top:1px dotted #000"></div>
<div style="position:absolute;left:270px;top:565.06px;width:1373px;height:0px;border-top:1px dotted #000"></div>
<div style="position:absolute;left:270px;top:592.52px;width:1373px;height:0px;border-top:1px dotted #000"></div>
<div style="position:absolute;left:270px;top:619.98px;width:1373px;height:0px;border-top:1px dotted #000"></div>
<div style="position:absolute;left:270px;top:647.44px;width:1373px;height:0px;border-top:1px dotted #000"></div>
<div style="position:absolute;left:270px;top:674.9000000000001px;width:1373px;height:0px;border-top:1px dotted #000"></div>
<div style="position:absolute;left:270px;top:702.36px;width:1373px;height:0px;border-top:1px dotted #000"></div>
<div style="position:absolute;left:270px;top:729.8199999999999px;width:1373px;height:0px;border-top:1px dotted #000"></div>
<div style="position:absolute;left:270px;top:757.28px;width:1373px;height:0px;border-top:1px dotted #000"></div>
<div style="position:absolute;left:270px;top:784.74px;width:1373px;height:0px;border-top:1px dotted #000"></div>
<div style="position:absolute;left:270px;top:812.2px;width:1373px;height:0px;border-top:1px dotted #000"></div>
<div style="position:absolute;left:270px;top:839.66px;width:1373px;height:0px;border-top:1px dotted #000"></div>
<div style="position:absolute;left:270px;top:867.12px;width:1373px;height:0px;border-top:1px dotted #000"></div>
<div style="position:absolute;left:270px;top:894.58px;width:1373px;height:0px;border-top:1px dotted #000"></div>
<div style="position:absolute;left:270px;top:922.04px;width:1373px;height:0px;border-top:1px dotted #000"></div>
<div style="position:absolute;left:270px;top:949.5px;width:1373px;height:0px;border-top:1px dotted #000"></div>
<div style="position:absolute;left:270px;top:976.96px;width:1373px;height:0px;border-top:1px dotted #000"></div>
<div style="position:absolute;left:270px;top:1004.4200000000001px;width:1373px;height:0px;border-top:1px dotted #000"></div>
<div style="position:absolute;left:270px;top:263.0px;width:1373px;height:0px;border-top:1px dotted #000"></div>
<div style="position:absolute;left:309px;top:236px;width:0px;height:751px;border-left:1px dotted #000"></div>
<div style="position:absolute;left:352px;top:236px;width:0px;height:751px;border-left:1px dotted #000"></div>
<div style="position:absolute;left:396px;top:236px;width:0px;height:751px;border-left:1px dotted #000"></div>
<div style="position:absolute;left:519px;top:236px;width:0px;height:751px;border-left:1px dotted #000"></div>
<div style="position:absolute;left:1000px;top:236px;width:0px;height:751px;border-left:1px dotted #000"></div>
<div style="position:absolute;left:1127px;top:236px;width:0px;height:751px;border-left:1px dotted #000"></div>
<div style="position:absolute;left:1176px;top:236px;width:0px;height:751px;border-left:1px dotted #000"></div>
<div style="position:absolute;left:1304px;top:236px;width:0px;height:751px;border-left:1px dotted #000"></div>
<div style="position:absolute;left:1362px;top:236px;width:0px;height:751px;border-left:1px dotted #000"></div>
<div style="position:absolute;left:1490px;top:236px;width:0px;height:751px;border-left:1px dotted #000"></div>
<div style="position:absolute;left:1541px;top:236px;width:0px;height:751px;border-left:1px dotted #000"></div>
<div style="position:absolute;left:1592px;top:236px;width:0px;height:751px;border-left:1px dotted #000"></div>
<div style="position:absolute;left:270px;top:235px;width:1px;height:752px;background:#000"></div>
<div style="position:absolute;left:1642px;top:235px;width:1px;height:752px;background:#000"></div>
<div style="position:absolute;left:1382px;top:88px;width:261px;height:41px;background:#d5d3de;border:1.5px solid #000;box-sizing:border-box;box-shadow:0 5px 8px rgba(0,0,0,.55)"></div>
<div class="t" style="left:1392px;top:99.76px;font-size:18px;line-height:18px;font-weight:700;color:#000;">Endsumme:</div>
<div class="t" style="left:1433px;width:200px;text-align:right;top:99.76px;font-size:18px;line-height:18px;font-weight:700;color:#000;">36905,64 EUR</div>
<div style="position:absolute;left:1663px;top:48px;width:17px;height:939px;background:#e2e2e2"></div>
<div style="position:absolute;left:1663px;top:65px;width:17px;height:321px;background:#c4c4c4"></div>
<svg style="position:absolute;left:1666px;top:51px" width="11" height="8"><path d="M1.5 6.5 L5.5 2.5 L9.5 6.5" fill="none" stroke="#333" stroke-width="1.6"/></svg>
<svg style="position:absolute;left:1666px;top:975px" width="11" height="8"><path d="M1.5 1.5 L5.5 5.5 L9.5 1.5" fill="none" stroke="#333" stroke-width="1.6"/></svg>

</div>
<div style="position:absolute;left:0;top:0;width:1680px;height:987px;background:rgba(0,0,0,0.46)"></div>
<div id="modal" style="position:absolute;left:0;top:0;width:1680px;height:987px;will-change:transform">
<div style="position:absolute;left:466px;top:131px;width:748px;height:721px;background:#fff;box-shadow:6px 7px 20px 2px rgba(0,0,0,.9)"></div>
<div style="position:absolute;left:467px;top:132px;width:746px;height:30px;background:#9a9a9a"></div>
<div class="t" style="left:474px;top:140.49px;font-size:13.6px;line-height:13.6px;font-weight:700;color:#fff;">PROJEKT-LV EXPORTIEREN</div>
<svg style="position:absolute;left:1161px;top:136px" width="46" height="20"><circle cx="10.5" cy="10" r="8.5" fill="none" stroke="#fff" stroke-width="1.2"/><text x="10.5" y="14.5" font-size="12.5" font-weight="700" fill="#fff" text-anchor="middle" font-family="Liberation Sans">?</text><circle cx="35" cy="10" r="9" fill="#ff0000" stroke="#fff" stroke-width="1"/><text x="35" y="14" font-size="12" font-weight="700" fill="#fff" text-anchor="middle" font-family="Liberation Sans">x</text></svg>
<div style="position:absolute;left:490px;top:188px;width:700px;height:639px;background:#eeeef6;border:1px solid #111;box-sizing:border-box"></div>
<div class="t" style="left:499px;top:199.15px;font-size:14px;line-height:14px;font-weight:700;color:#000;letter-spacing:0.35px;">Datenexport f&uuml;r:</div>
<div class="t" style="left:693px;top:199.15px;font-size:14px;line-height:14px;font-weight:700;color:#000;letter-spacing:0.24px;">LV-Erstellung (Anbot): W-03838-007 / Mustermann Franz</div>
<div class="t" style="left:499px;top:234.15px;font-size:14px;line-height:14px;font-weight:400;color:#000;letter-spacing:0.1px;">Ausgabeformat:</div>
<div style="position:absolute;left:693px;top:231px;width:480px;height:19px;background:#fff;border:1px solid #767676;box-sizing:border-box"></div>
<div class="t" style="left:695px;top:234.15px;font-size:14px;line-height:14px;font-weight:400;color:#000;letter-spacing:0.1px;">&Ouml;Norm A2063/2021 als Entwurf</div>
<svg style="position:absolute;left:1157px;top:237px" width="12" height="8"><path d="M1.5 1.5 L6 6 L10.5 1.5" fill="none" stroke="#000" stroke-width="1.6"/></svg>
<div class="t" style="left:499px;top:271.15px;font-size:14px;line-height:14px;font-weight:400;color:#000;letter-spacing:0.1px;">LV-Code:</div>
<svg style="position:absolute;left:562px;top:271.00px" width="14" height="14" viewBox="0 0 14 14"><rect x="1" y="1" width="12" height="12" rx="2" fill="#fff" stroke="#84848f" stroke-width="2"/></svg>
<div style="position:absolute;left:693px;top:266.5px;width:488px;height:22.5px;background:#fff;border:1px solid #8f8f9d;border-radius:2px;box-sizing:border-box"></div>
<div class="t" style="left:697px;top:271.15px;font-size:14px;line-height:14px;font-weight:400;color:#000;letter-spacing:0.1px;">W-03838-007</div>
<div class="t" style="left:499px;top:310.15px;font-size:14px;line-height:14px;font-weight:400;color:#000;letter-spacing:0.1px;">Auftrag-Code:</div>
<svg style="position:absolute;left:593px;top:310.00px" width="14" height="14" viewBox="0 0 14 14"><rect x="1" y="1" width="12" height="12" rx="2" fill="#fff" stroke="#84848f" stroke-width="2"/></svg>
<div style="position:absolute;left:693px;top:305.5px;width:488px;height:22.5px;background:#fff;border:1px solid #8f8f9d;border-radius:2px;box-sizing:border-box"></div>
<div class="t" style="left:499px;top:349.15px;font-size:14px;line-height:14px;font-weight:400;color:#000;letter-spacing:0.1px;">Zusatzangebots-Nr.:</div>
<div style="position:absolute;left:693px;top:344.5px;width:58px;height:22.5px;background:#fff;border:1px solid #8f8f9d;border-radius:2px;box-sizing:border-box"></div>
<div class="t" style="left:707px;width:40px;text-align:right;top:349.15px;font-size:14px;line-height:14px;font-weight:400;color:#000;letter-spacing:0.1px;">0</div>
<div class="t" style="left:499px;top:388.15px;font-size:14px;line-height:14px;font-weight:400;color:#000;letter-spacing:0.1px;">Alternativangebots-Nr.:</div>
<div style="position:absolute;left:693px;top:383.5px;width:58px;height:22.5px;background:#fff;border:1px solid #8f8f9d;border-radius:2px;box-sizing:border-box"></div>
<div class="t" style="left:707px;width:40px;text-align:right;top:388.15px;font-size:14px;line-height:14px;font-weight:400;color:#000;letter-spacing:0.1px;">0</div>
<div class="t" style="left:499px;top:424.15px;font-size:14px;line-height:14px;font-weight:400;color:#000;letter-spacing:0.1px;">Inhalt:</div>
<svg style="position:absolute;left:693px;top:424.50px" width="14" height="14" viewBox="0 0 14 14"><rect x="1" y="1" width="12" height="12" rx="2" fill="#fff" stroke="#84848f" stroke-width="2"/></svg>
<div class="t" style="left:713px;top:424.15px;font-size:14px;line-height:14px;font-weight:400;color:#000;letter-spacing:0.13px;">A2063: Leere L&uuml;cken ignorieren</div>
<svg style="position:absolute;left:693px;top:443.50px" width="14" height="14" viewBox="0 0 14 14"><rect x="0" y="0" width="14" height="14" rx="2.5" fill="#005ce6"/><path d="M3.2 7.4 L5.9 10.1 L11 4" fill="none" stroke="#fff" stroke-width="2.1"/></svg>
<div class="t" style="left:713px;top:443.15px;font-size:14px;line-height:14px;font-weight:400;color:#000;letter-spacing:0.08px;">A2063: Ausma&szlig;ermittung exportieren (Entwurf oder Kostensch&auml;tzung)</div>
<div class="t" style="left:499px;top:477.15px;font-size:14px;line-height:14px;font-weight:400;color:#000;letter-spacing:0.1px;">Validierung:</div>
<svg style="position:absolute;left:693px;top:477.50px" width="14" height="14" viewBox="0 0 14 14"><rect x="0" y="0" width="14" height="14" rx="2.5" fill="#005ce6"/><path d="M3.2 7.4 L5.9 10.1 L11 4" fill="none" stroke="#fff" stroke-width="2.1"/></svg>
<div class="t" style="left:713px;top:477.15px;font-size:14px;line-height:14px;font-weight:400;color:#000;letter-spacing:0.05px;">A2063 oder GAEB: Validierung nach XSD-Schema durchf&uuml;hren</div>
<div class="t" style="left:499px;top:512.15px;font-size:14px;line-height:14px;font-weight:400;color:#000;letter-spacing:0.1px;">Kompatibilit&auml;t:</div>
<svg style="position:absolute;left:693px;top:512.50px" width="14" height="14" viewBox="0 0 14 14"><rect x="1" y="1" width="12" height="12" rx="2" fill="#fff" stroke="#84848f" stroke-width="2"/></svg>
<div class="t" style="left:713px;top:512.15px;font-size:14px;line-height:14px;font-weight:400;color:#000;letter-spacing:0.08px;">GAEB: Haupt- und Obergruppen numerisch ohne f&uuml;hrende Null</div>
<svg style="position:absolute;left:693px;top:530.50px" width="14" height="14" viewBox="0 0 14 14"><rect x="0" y="0" width="14" height="14" rx="2.5" fill="#005ce6"/><path d="M3.2 7.4 L5.9 10.1 L11 4" fill="none" stroke="#fff" stroke-width="2.1"/></svg>
<div class="t" style="left:713px;top:530.15px;font-size:14px;line-height:14px;font-weight:400;color:#000;letter-spacing:0.02px;">GAEB: Positionsnummern ohne Trennzeichen</div>
<div class="t" style="left:499px;top:565.15px;font-size:14px;line-height:14px;font-weight:400;color:#000;letter-spacing:0.1px;">Zeilenschaltung:</div>
<svg style="position:absolute;left:693px;top:565.50px" width="14" height="14" viewBox="0 0 14 14"><rect x="1" y="1" width="12" height="12" rx="2" fill="#fff" stroke="#84848f" stroke-width="2"/></svg>
<div class="t" style="left:713px;top:565.15px;font-size:14px;line-height:14px;font-weight:400;color:#000;letter-spacing:-0.05px;">NUR BEI B2063: Zeilenschaltung kennzeichnen</div>
<div class="t" style="left:499px;top:599.15px;font-size:14px;line-height:14px;font-weight:400;color:#000;letter-spacing:0.1px;">Pos-Zeilen +/-%:</div>
<svg style="position:absolute;left:693px;top:599.50px" width="14" height="14" viewBox="0 0 14 14"><rect x="1" y="1" width="12" height="12" rx="2" fill="#fff" stroke="#84848f" stroke-width="2"/></svg>
<div class="t" style="left:713px;top:599.15px;font-size:14px;line-height:14px;font-weight:400;color:#000;letter-spacing:-0.06px;">NUR BEI &Ouml;Norm: Prozente als Endsummenauf-/abschlag umlegen</div>
<div class="t" style="left:499px;top:634.15px;font-size:14px;line-height:14px;font-weight:400;color:#000;letter-spacing:0.1px;">Identit&auml;t:</div>
<svg style="position:absolute;left:693px;top:634.50px" width="14" height="14" viewBox="0 0 14 14"><rect x="1" y="1" width="12" height="12" rx="2" fill="#fff" stroke="#84848f" stroke-width="2"/></svg>
<div class="t" style="left:713px;top:634.15px;font-size:14px;line-height:14px;font-weight:400;color:#000;letter-spacing:0.13px;">neutrale Ausgabe (keine Angaben zur Identit&auml;t)</div>
<div class="t" style="left:499px;top:670.15px;font-size:14px;line-height:14px;font-weight:400;color:#000;letter-spacing:0.1px;">Kontaktdaten:</div>
<div class="t" style="left:693px;top:670.15px;font-size:14px;line-height:14px;font-weight:400;color:#000;letter-spacing:0.1px;">Liste der beteiligten Personen / Firmen</div>
<svg style="position:absolute;left:945px;top:668px;filter:drop-shadow(2px 2px 1.5px rgba(0,0,0,.6))" width="18" height="16"><rect x="1.2" y="4" width="11.6" height="10.7" fill="#fff" stroke="#000" stroke-width="1.3"/><path d="M2.8 10.5 H4.3 M5.6 10.5 H11.5 M2.8 12.6 H4.3 M5.6 12.6 H11.5" stroke="#000" stroke-width="1.1"/><path d="M3 6.5 L7.6 1.4 H14.6 L15 3.6 L10.3 8.3 Z" fill="#f8c8c8" stroke="#000" stroke-width="0.8"/><rect x="15.2" y="1" width="1.9" height="5" fill="#000080"/></svg>
<div class="t" style="left:499px;top:706.15px;font-size:14px;line-height:14px;font-weight:400;color:#000;letter-spacing:0.1px;">Teilexport:</div>
<svg style="position:absolute;left:693px;top:706.50px" width="14" height="14" viewBox="0 0 14 14"><rect x="1" y="1" width="12" height="12" rx="2" fill="#fafafc" stroke="#c8c8d0" stroke-width="1.6"/></svg>
<div class="t" style="left:713px;top:706.15px;font-size:14px;line-height:14px;font-weight:400;color:#000;letter-spacing:0.07px;">nur ausgew&auml;hlte Positionen exportieren</div>
<div class="t" style="left:499px;top:743.15px;font-size:14px;line-height:14px;font-weight:700;color:#000;letter-spacing:0.3px;">Dateiname:</div>
<div style="position:absolute;left:693px;top:738px;width:484px;height:22px;background:#fff;border:1px solid #767676;box-sizing:border-box"></div>
<div class="t" style="left:695px;top:742.15px;font-size:14px;line-height:14px;font-weight:400;color:#000;letter-spacing:0.1px;">W-03838-007</div>
<div class="t" style="left:693px;top:763.84px;font-size:12px;line-height:12px;font-weight:400;color:#000;">(Dateiname ohne Erweiterung, zB.: LV_MaxMueller)</div>
<div style="position:absolute;left:1009.5px;top:795.5px;width:102px;height:22px;background:#e9e9ed;border:1px solid #8f8f9d;border-radius:3px;box-sizing:border-box"></div>
<div class="t" style="left:1009.5px;width:102px;text-align:center;top:799.65px;font-size:14px;line-height:14px;font-weight:400;color:#000;letter-spacing:0.1px;">LV exportieren</div>
<div style="position:absolute;left:1116.5px;top:795.5px;width:64px;height:22px;background:#e9e9ed;border:1px solid #8f8f9d;border-radius:3px;box-sizing:border-box"></div>
<div class="t" style="left:1116.5px;width:64px;text-align:center;top:799.65px;font-size:14px;line-height:14px;font-weight:400;color:#000;letter-spacing:0.1px;">Abbruch</div>

</div>
</body></html>
